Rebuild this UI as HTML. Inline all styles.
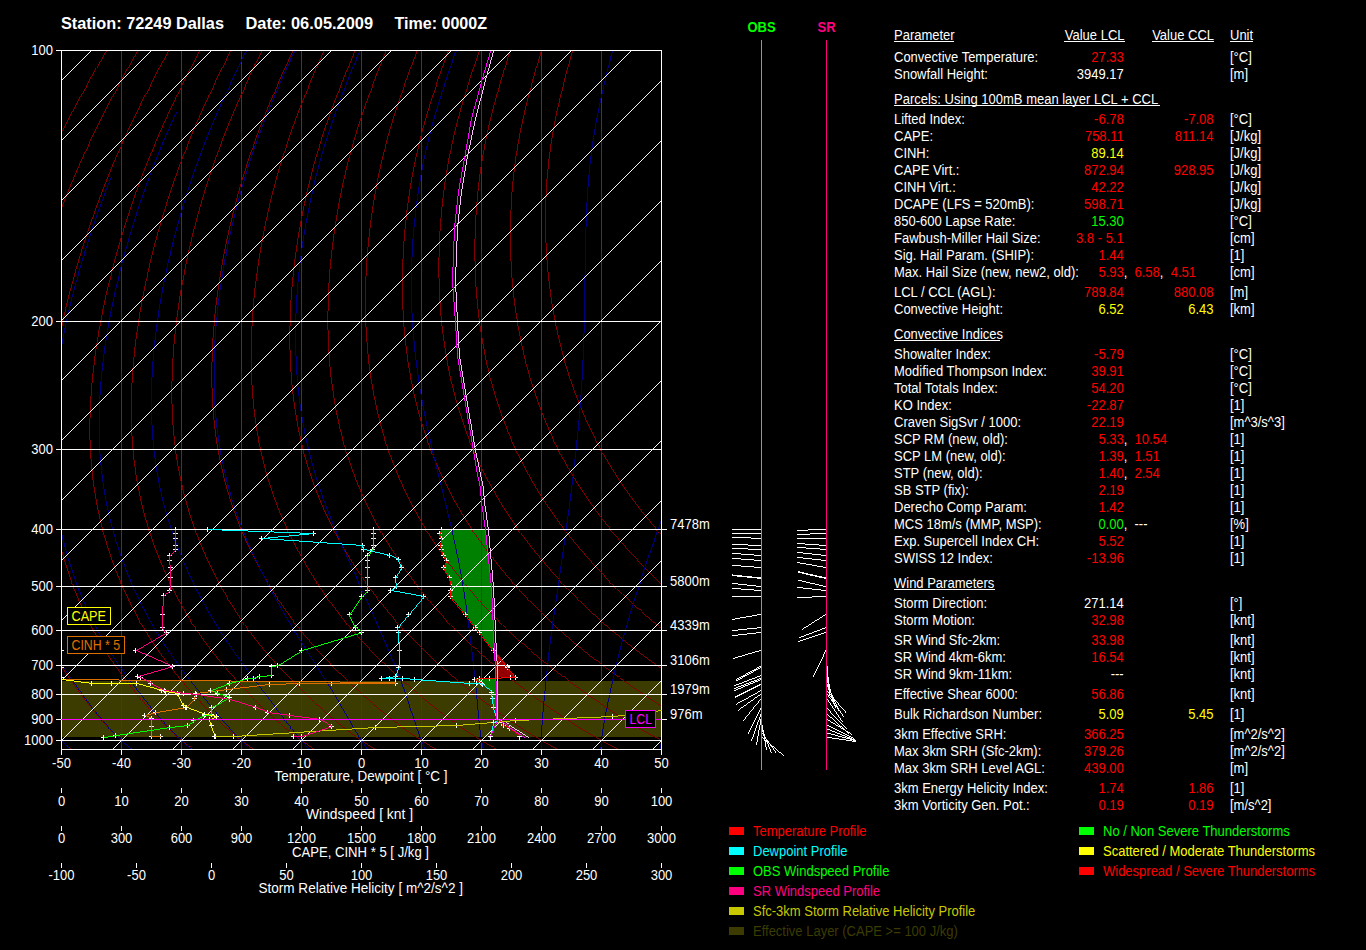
<!DOCTYPE html>
<html lang="en"><head><meta charset="utf-8"><title>Sounding 72249 Dallas</title>
<style>
html,body{margin:0;padding:0;background:#000;width:1366px;height:950px;overflow:hidden}
svg{display:block;position:absolute;left:0;top:0;font-family:"Liberation Sans",sans-serif;font-size:13px;fill:#fff}
.c{shape-rendering:crispEdges}
.c line{stroke-linecap:square}
.c,.c *{stroke-width:.99px}
</style></head><body>
<svg width="1366" height="950" viewBox="0 0 1366 950">
<rect x="0" y="0" width="1366" height="950" fill="#000"/>
<defs><clipPath id="cp"><rect x="61" y="50" width="601" height="700"/></clipPath></defs>
<g clip-path="url(#cp)">
<rect x="61" y="681" width="601" height="56" fill="#3c3c00" class="c"/>
<polygon class="c" fill="#008000" points="441.4,529.5 439.5,533.5 441.4,538.4 440.6,545.4 441.6,549.5 443.6,555.5 446.5,560.4 443.4,567.5 449.1,577.8 451.7,586.7 450.6,590.5 450.8,596.6 465.7,614.5 475.4,627.6 479.5,632.5 493.3,650.3 494.6,650.3 493.7,629 491.2,586 485.6,529.5"/>
<polygon class="c" fill="#960000" points="494.6,650.3 507.5,666 507.5,667.6 515.5,677 496,677.6 495.5,665"/>
<polygon class="c" fill="#008000" points="477,678 496,678 496.8,719 497,719 493.5,707 492.2,698.3 491.6,692.1 482.9,684 481.8,683.6 474.3,679.3"/>
<g class="c" fill="none">
<line x1="121.5" y1="50.5" x2="121.5" y2="749.5" stroke="#006400" stroke-width="1"/>
<line x1="181.5" y1="50.5" x2="181.5" y2="749.5" stroke="#006400" stroke-width="1"/>
<line x1="241.5" y1="50.5" x2="241.5" y2="749.5" stroke="#006400" stroke-width="1"/>
<line x1="301.5" y1="50.5" x2="301.5" y2="749.5" stroke="#006400" stroke-width="1"/>
<line x1="361.5" y1="50.5" x2="361.5" y2="749.5" stroke="#006400" stroke-width="1"/>
<line x1="421.5" y1="50.5" x2="421.5" y2="749.5" stroke="#006400" stroke-width="1"/>
<line x1="481.5" y1="50.5" x2="481.5" y2="749.5" stroke="#006400" stroke-width="1"/>
<line x1="541.5" y1="50.5" x2="541.5" y2="749.5" stroke="#006400" stroke-width="1"/>
<line x1="601.5" y1="50.5" x2="601.5" y2="749.5" stroke="#006400" stroke-width="1"/>
<polyline fill="none" stroke="#800000" stroke-width="1" points="106.1,50.5 101,59.5 96,68.4 91.2,77 86.6,85.5 82,93.7 77.7,101.7 73.5,109.6 69.5,117.2 65.6,124.6 61.9,131.7 58.4,138.7 55.1,145.5 51.9,152.1 48.8,158.4 45.9,164.7 43.1,170.7 40.4,176.7 37.8,182.4 35.3,188.1 32.9,193.6 30.6,199 28.4,204.3 26.2,209.6 24.1,214.7 22.1,219.7 20.1,224.6 18.2,229.4 16.4,234.2 14.6,238.8 12.9,243.4 11.2,247.9 9.5,252.3 8,256.7 6.4,261 4.9,265.2 3.5,269.4 2.1,273.5 0.7,277.5 -0.6,281.4 -1.9,285.4 -3.2,289.2 -4.4,293 -5.6,296.7 -6.8,300.4 -7.9,304.1 -9,307.6 -10,311.2 -11,314.7 -12,318.1 -13,321.5 -15.3,329.8 -17.5,337.8 -19.5,345.6 -21.4,353.2 -23.1,360.5 -24.7,367.6 -26.2,374.5 -27.6,381.3 -28.9,387.8 -30,394.2 -31.1,400.4 -32.1,406.4 -33,412.3 -33.8,418 -34.6,423.6 -35.2,429 -35.8,434.3 -36.3,439.5 -36.8,444.6 -37.2,449.5 -37.5,454.3 -37.8,459.1 -38,463.7 -38.2,468.2 -38.3,472.6 -38.4,476.9 -38.5,481.2 -38.5,485.3 -38.4,489.4 -38.4,493.4 -38.2,497.3 -38.1,501.2 -37.9,504.9 -37.7,508.6 -37.5,512.3 -37.2,515.8 -36.9,519.3 -36.6,522.8 -36.2,526.2 -35.9,529.5 -35.5,532.8 -35.1,536 -34.7,539.2 -34.2,542.3 -33.7,545.4 -33.2,548.4 -32.7,551.4 -32.2,554.3 -31.7,557.2 -31.2,560 -30.6,562.9 -30,565.6 -29.4,568.4 -28.8,571.1 -28.2,573.7 -27.6,576.3 -27,578.9 -26.3,581.5 -25.7,584 -25,586.5 -24.4,589 -23.7,591.4 -23,593.8 -22.3,596.2 -21.6,598.5 -20.9,600.8 -20.2,603.1 -19.5,605.4 -18.8,607.6 -18,609.8 -17.3,612 -16.6,614.2 -15.8,616.3 -15,618.4 -14.3,620.5 -13.5,622.5 -12.7,624.6 -11.9,626.6 -11.1,628.5 -10.3,630.5 -9.5,632.4 -8.7,634.4 -7.9,636.2 -7,638.1 -6.2,640 -5.4,641.8 -4.5,643.6 -3.7,645.4 -2.8,647.2 -2,648.9 -1.1,650.7 -0.2,652.4 0.6,654.1 1.5,655.8 2.4,657.4 3.2,659.1 4.1,660.7 5,662.3 5.9,663.9 6.8,665.5 7.7,667.1 8.6,668.6 9.5,670.2 10.4,671.7 11.3,673.2 12.2,674.7 13.1,676.2 14,677.7 14.9,679.1 15.8,680.6 16.7,682 17.6,683.4 18.5,684.9 19.4,686.3 20.3,687.7 21.2,689.1 22.1,690.4 23,691.8 23.9,693.2 24.8,694.5 25.7,695.8 26.6,697.2 27.5,698.5 28.4,699.8 29.3,701.1 30.2,702.4 31.1,703.7 32,705 32.9,706.2 33.8,707.5 34.7,708.7 35.6,710 36.5,711.2 37.4,712.4 38.3,713.6 39.2,714.8 40.1,716 41,717.2 41.9,718.3 42.8,719.5 43.7,720.6 44.6,721.8 45.5,722.9 46.4,724 47.4,725.1 48.3,726.2 49.2,727.3 50.1,728.4 51.1,729.5 52,730.5 52.9,731.6 53.9,732.6 54.8,733.6 55.8,734.6 56.7,735.6 57.7,736.6 58.6,737.6 59.6,738.6 60.5,739.6 61.5,740.5 62.5,741.4 63.4,742.4 64.4,743.3 65.4,744.2 66.4,745.1 67.4,746 68.4,746.9 69.3,747.8 70.3,748.6 71.3,749.5"/>
<polyline fill="none" stroke="#800000" stroke-width="1" points="137.2,50.5 132.3,59.5 127.5,68.4 122.8,77 118.3,85.5 114,93.7 109.8,101.7 105.8,109.6 101.9,117.2 98.2,124.6 94.7,131.7 91.3,138.7 88.1,145.5 85.1,152.1 82.2,158.4 79.4,164.7 76.8,170.7 74.2,176.7 71.8,182.4 69.4,188.1 67.2,193.6 65,199 62.9,204.3 60.9,209.6 58.9,214.7 57,219.7 55.2,224.6 53.4,229.4 51.7,234.2 50,238.8 48.4,243.4 46.8,247.9 45.3,252.3 43.9,256.7 42.5,261 41.1,265.2 39.7,269.4 38.5,273.5 37.2,277.5 36,281.4 34.8,285.4 33.7,289.2 32.6,293 31.5,296.7 30.5,300.4 29.5,304.1 28.5,307.6 27.5,311.2 26.6,314.7 25.7,318.1 24.9,321.5 22.8,329.8 20.9,337.8 19.2,345.6 17.6,353.2 16.1,360.5 14.7,367.6 13.5,374.5 12.3,381.3 11.3,387.8 10.3,394.2 9.5,400.4 8.7,406.4 8.1,412.3 7.5,418 6.9,423.6 6.5,429 6.1,434.3 5.8,439.5 5.5,444.6 5.3,449.5 5.2,454.3 5.1,459.1 5.1,463.7 5.1,468.2 5.2,472.6 5.3,476.9 5.4,481.2 5.6,485.3 5.8,489.4 6.1,493.4 6.4,497.3 6.7,501.2 7.1,504.9 7.5,508.6 7.9,512.3 8.3,515.8 8.8,519.3 9.3,522.8 9.8,526.2 10.3,529.5 10.9,532.8 11.4,536 12,539.2 12.6,542.3 13.3,545.4 13.9,548.4 14.6,551.4 15.2,554.3 15.9,557.2 16.6,560 17.3,562.9 18,565.6 18.8,568.4 19.5,571.1 20.3,573.7 21,576.3 21.8,578.9 22.6,581.5 23.4,584 24.2,586.5 25,589 25.8,591.4 26.6,593.8 27.4,596.2 28.3,598.5 29.1,600.8 30,603.1 30.8,605.4 31.7,607.6 32.5,609.8 33.4,612 34.3,614.2 35.2,616.3 36.1,618.4 37,620.5 37.9,622.5 38.8,624.6 39.7,626.6 40.6,628.5 41.5,630.5 42.5,632.4 43.4,634.4 44.4,636.2 45.3,638.1 46.3,640 47.2,641.8 48.2,643.6 49.1,645.4 50.1,647.2 51.1,648.9 52.1,650.7 53,652.4 54,654.1 55,655.8 56,657.4 57,659.1 58,660.7 59,662.3 60,663.9 61,665.5 62,667.1 63,668.6 64,670.2 65,671.7 66,673.2 67,674.7 68,676.2 69,677.7 70,679.1 71,680.6 72.1,682 73.1,683.4 74.1,684.9 75.1,686.3 76.1,687.7 77.1,689.1 78.1,690.4 79.1,691.8 80.1,693.2 81.1,694.5 82.1,695.8 83.1,697.2 84.1,698.5 85.1,699.8 86.1,701.1 87.1,702.4 88.1,703.7 89.1,705 90.1,706.2 91.1,707.5 92,708.7 93,710 94,711.2 95,712.4 96,713.6 97,714.8 98,716 99,717.2 100,718.3 101,719.5 102,720.6 103,721.8 104,722.9 105,724 106,725.1 107.1,726.2 108.1,727.3 109.1,728.4 110.1,729.5 111.1,730.5 112.1,731.6 113.2,732.6 114.2,733.6 115.2,734.6 116.3,735.6 117.3,736.6 118.4,737.6 119.4,738.6 120.4,739.6 121.5,740.5 122.6,741.4 123.6,742.4 124.7,743.3 125.7,744.2 126.8,745.1 127.9,746 128.9,746.9 130,747.8 131.1,748.6 132.1,749.5"/>
<polyline fill="none" stroke="#800000" stroke-width="1" points="168.3,50.5 163.5,59.5 158.9,68.4 154.4,77 150.1,85.5 145.9,93.7 141.9,101.7 138,109.6 134.3,117.2 130.8,124.6 127.4,131.7 124.2,138.7 121.2,145.5 118.3,152.1 115.5,158.4 112.9,164.7 110.4,170.7 108,176.7 105.7,182.4 103.5,188.1 101.4,193.6 99.3,199 97.4,204.3 95.5,209.6 93.7,214.7 91.9,219.7 90.2,224.6 88.6,229.4 87,234.2 85.4,238.8 83.9,243.4 82.5,247.9 81.1,252.3 79.8,256.7 78.5,261 77.2,265.2 76,269.4 74.9,273.5 73.7,277.5 72.6,281.4 71.6,285.4 70.6,289.2 69.6,293 68.6,296.7 67.7,300.4 66.8,304.1 65.9,307.6 65.1,311.2 64.3,314.7 63.5,318.1 62.7,321.5 61,329.8 59.3,337.8 57.9,345.6 56.5,353.2 55.3,360.5 54.1,367.6 53.1,374.5 52.2,381.3 51.4,387.8 50.7,394.2 50.1,400.4 49.6,406.4 49.1,412.3 48.7,418 48.4,423.6 48.2,429 48,434.3 47.9,439.5 47.9,444.6 47.9,449.5 47.9,454.3 48.1,459.1 48.2,463.7 48.4,468.2 48.7,472.6 49,476.9 49.3,481.2 49.7,485.3 50.1,489.4 50.5,493.4 51,497.3 51.5,501.2 52.1,504.9 52.6,508.6 53.2,512.3 53.8,515.8 54.4,519.3 55.1,522.8 55.8,526.2 56.5,529.5 57.2,532.8 57.9,536 58.7,539.2 59.5,542.3 60.2,545.4 61,548.4 61.9,551.4 62.7,554.3 63.5,557.2 64.4,560 65.2,562.9 66.1,565.6 67,568.4 67.9,571.1 68.8,573.7 69.7,576.3 70.6,578.9 71.5,581.5 72.5,584 73.4,586.5 74.3,589 75.3,591.4 76.3,593.8 77.2,596.2 78.2,598.5 79.2,600.8 80.1,603.1 81.1,605.4 82.1,607.6 83.1,609.8 84.1,612 85.1,614.2 86.1,616.3 87.2,618.4 88.2,620.5 89.2,622.5 90.3,624.6 91.3,626.6 92.3,628.5 93.4,630.5 94.4,632.4 95.5,634.4 96.6,636.2 97.6,638.1 98.7,640 99.8,641.8 100.9,643.6 102,645.4 103,647.2 104.1,648.9 105.2,650.7 106.3,652.4 107.4,654.1 108.5,655.8 109.6,657.4 110.7,659.1 111.8,660.7 112.9,662.3 114,663.9 115.2,665.5 116.3,667.1 117.4,668.6 118.5,670.2 119.6,671.7 120.7,673.2 121.8,674.7 123,676.2 124.1,677.7 125.2,679.1 126.3,680.6 127.4,682 128.5,683.4 129.6,684.9 130.8,686.3 131.9,687.7 133,689.1 134.1,690.4 135.2,691.8 136.3,693.2 137.4,694.5 138.5,695.8 139.6,697.2 140.7,698.5 141.8,699.8 142.9,701.1 144,702.4 145.1,703.7 146.2,705 147.2,706.2 148.3,707.5 149.4,708.7 150.5,710 151.6,711.2 152.7,712.4 153.8,713.6 154.9,714.8 156,716 157.1,717.2 158.1,718.3 159.2,719.5 160.3,720.6 161.4,721.8 162.5,722.9 163.6,724 164.7,725.1 165.8,726.2 166.9,727.3 168,728.4 169.1,729.5 170.2,730.5 171.4,731.6 172.5,732.6 173.6,733.6 174.7,734.6 175.8,735.6 177,736.6 178.1,737.6 179.2,738.6 180.4,739.6 181.5,740.5 182.6,741.4 183.8,742.4 184.9,743.3 186.1,744.2 187.2,745.1 188.4,746 189.5,746.9 190.7,747.8 191.8,748.6 193,749.5"/>
<polyline fill="none" stroke="#800000" stroke-width="1" points="199.3,50.5 194.8,59.5 190.3,68.4 186,77 181.9,85.5 177.8,93.7 174,101.7 170.3,109.6 166.7,117.2 163.4,124.6 160.2,131.7 157.1,138.7 154.2,145.5 151.5,152.1 148.9,158.4 146.4,164.7 144,170.7 141.8,176.7 139.6,182.4 137.6,188.1 135.6,193.6 133.7,199 131.9,204.3 130.1,209.6 128.4,214.7 126.8,219.7 125.2,224.6 123.7,229.4 122.3,234.2 120.8,238.8 119.5,243.4 118.2,247.9 116.9,252.3 115.7,256.7 114.5,261 113.4,265.2 112.3,269.4 111.3,273.5 110.3,277.5 109.3,281.4 108.3,285.4 107.4,289.2 106.6,293 105.7,296.7 104.9,300.4 104.1,304.1 103.4,307.6 102.6,311.2 102,314.7 101.3,318.1 100.6,321.5 99.1,329.8 97.8,337.8 96.5,345.6 95.4,353.2 94.4,360.5 93.6,367.6 92.8,374.5 92.1,381.3 91.6,387.8 91.1,394.2 90.7,400.4 90.4,406.4 90.2,412.3 90,418 89.9,423.6 89.9,429 89.9,434.3 90,439.5 90.2,444.6 90.4,449.5 90.7,454.3 91,459.1 91.4,463.7 91.8,468.2 92.2,472.6 92.7,476.9 93.2,481.2 93.8,485.3 94.4,489.4 95,493.4 95.7,497.3 96.3,501.2 97,504.9 97.8,508.6 98.5,512.3 99.3,515.8 100.1,519.3 101,522.8 101.8,526.2 102.7,529.5 103.5,532.8 104.4,536 105.4,539.2 106.3,542.3 107.2,545.4 108.2,548.4 109.2,551.4 110.1,554.3 111.1,557.2 112.1,560 113.1,562.9 114.2,565.6 115.2,568.4 116.2,571.1 117.3,573.7 118.3,576.3 119.4,578.9 120.5,581.5 121.5,584 122.6,586.5 123.7,589 124.8,591.4 125.9,593.8 127,596.2 128.1,598.5 129.2,600.8 130.3,603.1 131.4,605.4 132.6,607.6 133.7,609.8 134.8,612 136,614.2 137.1,616.3 138.3,618.4 139.4,620.5 140.6,622.5 141.7,624.6 142.9,626.6 144.1,628.5 145.2,630.5 146.4,632.4 147.6,634.4 148.8,636.2 150,638.1 151.2,640 152.4,641.8 153.6,643.6 154.8,645.4 156,647.2 157.2,648.9 158.4,650.7 159.6,652.4 160.8,654.1 162,655.8 163.2,657.4 164.5,659.1 165.7,660.7 166.9,662.3 168.1,663.9 169.3,665.5 170.6,667.1 171.8,668.6 173,670.2 174.2,671.7 175.5,673.2 176.7,674.7 177.9,676.2 179.1,677.7 180.4,679.1 181.6,680.6 182.8,682 184,683.4 185.2,684.9 186.4,686.3 187.7,687.7 188.9,689.1 190.1,690.4 191.3,691.8 192.5,693.2 193.7,694.5 194.9,695.8 196.1,697.2 197.3,698.5 198.5,699.8 199.7,701.1 200.9,702.4 202,703.7 203.2,705 204.4,706.2 205.6,707.5 206.8,708.7 208,710 209.2,711.2 210.4,712.4 211.5,713.6 212.7,714.8 213.9,716 215.1,717.2 216.3,718.3 217.5,719.5 218.6,720.6 219.8,721.8 221,722.9 222.2,724 223.4,725.1 224.6,726.2 225.8,727.3 227,728.4 228.2,729.5 229.4,730.5 230.6,731.6 231.8,732.6 233,733.6 234.2,734.6 235.4,735.6 236.6,736.6 237.8,737.6 239.1,738.6 240.3,739.6 241.5,740.5 242.7,741.4 244,742.4 245.2,743.3 246.4,744.2 247.7,745.1 248.9,746 250.1,746.9 251.4,747.8 252.6,748.6 253.8,749.5"/>
<polyline fill="none" stroke="#800000" stroke-width="1" points="230.4,50.5 226,59.5 221.8,68.4 217.6,77 213.6,85.5 209.8,93.7 206.1,101.7 202.5,109.6 199.2,117.2 195.9,124.6 192.9,131.7 190,138.7 187.3,145.5 184.7,152.1 182.2,158.4 179.9,164.7 177.7,170.7 175.6,176.7 173.6,182.4 171.6,188.1 169.8,193.6 168,199 166.4,204.3 164.7,209.6 163.2,214.7 161.7,219.7 160.3,224.6 158.9,229.4 157.5,234.2 156.3,238.8 155,243.4 153.9,247.9 152.7,252.3 151.6,256.7 150.6,261 149.6,265.2 148.6,269.4 147.7,273.5 146.8,277.5 145.9,281.4 145.1,285.4 144.3,289.2 143.6,293 142.8,296.7 142.1,300.4 141.5,304.1 140.8,307.6 140.2,311.2 139.6,314.7 139.1,318.1 138.5,321.5 137.3,329.8 136.2,337.8 135.2,345.6 134.4,353.2 133.6,360.5 133,367.6 132.5,374.5 132.1,381.3 131.7,387.8 131.5,394.2 131.3,400.4 131.2,406.4 131.2,412.3 131.3,418 131.4,423.6 131.6,429 131.9,434.3 132.2,439.5 132.5,444.6 133,449.5 133.4,454.3 133.9,459.1 134.5,463.7 135.1,468.2 135.7,472.6 136.4,476.9 137.1,481.2 137.9,485.3 138.6,489.4 139.5,493.4 140.3,497.3 141.1,501.2 142,504.9 142.9,508.6 143.9,512.3 144.8,515.8 145.8,519.3 146.8,522.8 147.8,526.2 148.8,529.5 149.9,532.8 150.9,536 152,539.2 153.1,542.3 154.2,545.4 155.3,548.4 156.5,551.4 157.6,554.3 158.7,557.2 159.9,560 161.1,562.9 162.2,565.6 163.4,568.4 164.6,571.1 165.8,573.7 167,576.3 168.2,578.9 169.4,581.5 170.6,584 171.8,586.5 173.1,589 174.3,591.4 175.5,593.8 176.8,596.2 178,598.5 179.3,600.8 180.5,603.1 181.8,605.4 183,607.6 184.3,609.8 185.5,612 186.8,614.2 188.1,616.3 189.4,618.4 190.6,620.5 191.9,622.5 193.2,624.6 194.5,626.6 195.8,628.5 197.1,630.5 198.4,632.4 199.7,634.4 201,636.2 202.3,638.1 203.6,640 205,641.8 206.3,643.6 207.6,645.4 208.9,647.2 210.2,648.9 211.6,650.7 212.9,652.4 214.2,654.1 215.5,655.8 216.9,657.4 218.2,659.1 219.5,660.7 220.9,662.3 222.2,663.9 223.5,665.5 224.9,667.1 226.2,668.6 227.5,670.2 228.9,671.7 230.2,673.2 231.5,674.7 232.9,676.2 234.2,677.7 235.5,679.1 236.8,680.6 238.2,682 239.5,683.4 240.8,684.9 242.1,686.3 243.4,687.7 244.8,689.1 246.1,690.4 247.4,691.8 248.7,693.2 250,694.5 251.3,695.8 252.6,697.2 253.9,698.5 255.2,699.8 256.5,701.1 257.7,702.4 259,703.7 260.3,705 261.6,706.2 262.9,707.5 264.2,708.7 265.5,710 266.7,711.2 268,712.4 269.3,713.6 270.6,714.8 271.8,716 273.1,717.2 274.4,718.3 275.7,719.5 277,720.6 278.2,721.8 279.5,722.9 280.8,724 282.1,725.1 283.4,726.2 284.6,727.3 285.9,728.4 287.2,729.5 288.5,730.5 289.8,731.6 291.1,732.6 292.4,733.6 293.7,734.6 295,735.6 296.3,736.6 297.6,737.6 298.9,738.6 300.2,739.6 301.5,740.5 302.8,741.4 304.1,742.4 305.4,743.3 306.8,744.2 308.1,745.1 309.4,746 310.7,746.9 312,747.8 313.4,748.6 314.7,749.5"/>
<polyline fill="none" stroke="#800000" stroke-width="1" points="261.5,50.5 257.3,59.5 253.2,68.4 249.2,77 245.4,85.5 241.7,93.7 238.2,101.7 234.8,109.6 231.6,117.2 228.5,124.6 225.6,131.7 222.9,138.7 220.3,145.5 217.9,152.1 215.6,158.4 213.4,164.7 211.3,170.7 209.4,176.7 207.5,182.4 205.7,188.1 204,193.6 202.4,199 200.9,204.3 199.4,209.6 197.9,214.7 196.6,219.7 195.3,224.6 194,229.4 192.8,234.2 191.7,238.8 190.6,243.4 189.5,247.9 188.5,252.3 187.5,256.7 186.6,261 185.7,265.2 184.9,269.4 184.1,273.5 183.3,277.5 182.6,281.4 181.9,285.4 181.2,289.2 180.5,293 179.9,296.7 179.3,300.4 178.8,304.1 178.3,307.6 177.8,311.2 177.3,314.7 176.8,318.1 176.4,321.5 175.4,329.8 174.6,337.8 173.9,345.6 173.3,353.2 172.8,360.5 172.4,367.6 172.1,374.5 172,381.3 171.9,387.8 171.9,394.2 171.9,400.4 172.1,406.4 172.3,412.3 172.6,418 172.9,423.6 173.3,429 173.8,434.3 174.3,439.5 174.9,444.6 175.5,449.5 176.2,454.3 176.9,459.1 177.6,463.7 178.4,468.2 179.3,472.6 180.1,476.9 181,481.2 182,485.3 182.9,489.4 183.9,493.4 184.9,497.3 186,501.2 187,504.9 188.1,508.6 189.2,512.3 190.3,515.8 191.5,519.3 192.6,522.8 193.8,526.2 195,529.5 196.2,532.8 197.5,536 198.7,539.2 199.9,542.3 201.2,545.4 202.5,548.4 203.8,551.4 205,554.3 206.3,557.2 207.7,560 209,562.9 210.3,565.6 211.6,568.4 213,571.1 214.3,573.7 215.6,576.3 217,578.9 218.3,581.5 219.7,584 221.1,586.5 222.4,589 223.8,591.4 225.2,593.8 226.5,596.2 227.9,598.5 229.3,600.8 230.7,603.1 232.1,605.4 233.5,607.6 234.9,609.8 236.2,612 237.6,614.2 239.1,616.3 240.5,618.4 241.9,620.5 243.3,622.5 244.7,624.6 246.1,626.6 247.5,628.5 248.9,630.5 250.4,632.4 251.8,634.4 253.2,636.2 254.7,638.1 256.1,640 257.5,641.8 259,643.6 260.4,645.4 261.8,647.2 263.3,648.9 264.7,650.7 266.2,652.4 267.6,654.1 269.1,655.8 270.5,657.4 271.9,659.1 273.4,660.7 274.8,662.3 276.3,663.9 277.7,665.5 279.2,667.1 280.6,668.6 282,670.2 283.5,671.7 284.9,673.2 286.4,674.7 287.8,676.2 289.2,677.7 290.7,679.1 292.1,680.6 293.5,682 295,683.4 296.4,684.9 297.8,686.3 299.2,687.7 300.6,689.1 302.1,690.4 303.5,691.8 304.9,693.2 306.3,694.5 307.7,695.8 309.1,697.2 310.5,698.5 311.9,699.8 313.3,701.1 314.6,702.4 316,703.7 317.4,705 318.8,706.2 320.2,707.5 321.5,708.7 322.9,710 324.3,711.2 325.7,712.4 327,713.6 328.4,714.8 329.8,716 331.2,717.2 332.5,718.3 333.9,719.5 335.3,720.6 336.6,721.8 338,722.9 339.4,724 340.8,725.1 342.1,726.2 343.5,727.3 344.9,728.4 346.3,729.5 347.6,730.5 349,731.6 350.4,732.6 351.8,733.6 353.2,734.6 354.5,735.6 355.9,736.6 357.3,737.6 358.7,738.6 360.1,739.6 361.5,740.5 362.9,741.4 364.3,742.4 365.7,743.3 367.1,744.2 368.5,745.1 369.9,746 371.3,746.9 372.7,747.8 374.1,748.6 375.5,749.5"/>
<polyline fill="none" stroke="#800000" stroke-width="1" points="292.6,50.5 288.5,59.5 284.6,68.4 280.8,77 277.2,85.5 273.7,93.7 270.3,101.7 267.1,109.6 264,117.2 261.1,124.6 258.4,131.7 255.8,138.7 253.4,145.5 251.1,152.1 248.9,158.4 246.9,164.7 245,170.7 243.1,176.7 241.4,182.4 239.8,188.1 238.2,193.6 236.8,199 235.3,204.3 234,209.6 232.7,214.7 231.5,219.7 230.3,224.6 229.2,229.4 228.1,234.2 227.1,238.8 226.1,243.4 225.2,247.9 224.3,252.3 223.5,256.7 222.7,261 221.9,265.2 221.2,269.4 220.5,273.5 219.8,277.5 219.2,281.4 218.6,285.4 218.1,289.2 217.5,293 217,296.7 216.6,300.4 216.1,304.1 215.7,307.6 215.3,311.2 214.9,314.7 214.6,318.1 214.3,321.5 213.6,329.8 213,337.8 212.6,345.6 212.2,353.2 212,360.5 211.9,367.6 211.8,374.5 211.9,381.3 212,387.8 212.2,394.2 212.5,400.4 212.9,406.4 213.3,412.3 213.8,418 214.4,423.6 215,429 215.7,434.3 216.4,439.5 217.2,444.6 218,449.5 218.9,454.3 219.8,459.1 220.8,463.7 221.8,468.2 222.8,472.6 223.8,476.9 224.9,481.2 226,485.3 227.2,489.4 228.4,493.4 229.6,497.3 230.8,501.2 232,504.9 233.3,508.6 234.6,512.3 235.8,515.8 237.2,519.3 238.5,522.8 239.8,526.2 241.2,529.5 242.6,532.8 244,536 245.4,539.2 246.8,542.3 248.2,545.4 249.6,548.4 251.1,551.4 252.5,554.3 254,557.2 255.4,560 256.9,562.9 258.4,565.6 259.8,568.4 261.3,571.1 262.8,573.7 264.3,576.3 265.8,578.9 267.3,581.5 268.8,584 270.3,586.5 271.8,589 273.3,591.4 274.8,593.8 276.3,596.2 277.8,598.5 279.3,600.8 280.9,603.1 282.4,605.4 283.9,607.6 285.4,609.8 287,612 288.5,614.2 290,616.3 291.6,618.4 293.1,620.5 294.6,622.5 296.2,624.6 297.7,626.6 299.3,628.5 300.8,630.5 302.3,632.4 303.9,634.4 305.5,636.2 307,638.1 308.6,640 310.1,641.8 311.7,643.6 313.2,645.4 314.8,647.2 316.3,648.9 317.9,650.7 319.5,652.4 321,654.1 322.6,655.8 324.1,657.4 325.7,659.1 327.2,660.7 328.8,662.3 330.4,663.9 331.9,665.5 333.5,667.1 335,668.6 336.6,670.2 338.1,671.7 339.7,673.2 341.2,674.7 342.8,676.2 344.3,677.7 345.8,679.1 347.4,680.6 348.9,682 350.4,683.4 352,684.9 353.5,686.3 355,687.7 356.5,689.1 358,690.4 359.6,691.8 361.1,693.2 362.6,694.5 364.1,695.8 365.6,697.2 367.1,698.5 368.6,699.8 370,701.1 371.5,702.4 373,703.7 374.5,705 376,706.2 377.4,707.5 378.9,708.7 380.4,710 381.9,711.2 383.3,712.4 384.8,713.6 386.3,714.8 387.7,716 389.2,717.2 390.7,718.3 392.1,719.5 393.6,720.6 395,721.8 396.5,722.9 398,724 399.4,725.1 400.9,726.2 402.4,727.3 403.8,728.4 405.3,729.5 406.8,730.5 408.2,731.6 409.7,732.6 411.2,733.6 412.6,734.6 414.1,735.6 415.6,736.6 417.1,737.6 418.5,738.6 420,739.6 421.5,740.5 423,741.4 424.5,742.4 426,743.3 427.4,744.2 428.9,745.1 430.4,746 431.9,746.9 433.4,747.8 434.9,748.6 436.3,749.5"/>
<polyline fill="none" stroke="#800000" stroke-width="1" points="323.6,50.5 319.8,59.5 316,68.4 312.4,77 308.9,85.5 305.6,93.7 302.4,101.7 299.3,109.6 296.4,117.2 293.7,124.6 291.1,131.7 288.7,138.7 286.4,145.5 284.3,152.1 282.3,158.4 280.4,164.7 278.6,170.7 276.9,176.7 275.4,182.4 273.9,188.1 272.4,193.6 271.1,199 269.8,204.3 268.6,209.6 267.5,214.7 266.4,219.7 265.3,224.6 264.3,229.4 263.4,234.2 262.5,238.8 261.7,243.4 260.9,247.9 260.1,252.3 259.4,256.7 258.7,261 258.1,265.2 257.5,269.4 256.9,273.5 256.4,277.5 255.9,281.4 255.4,285.4 254.9,289.2 254.5,293 254.1,296.7 253.8,300.4 253.5,304.1 253.2,307.6 252.9,311.2 252.6,314.7 252.4,318.1 252.2,321.5 251.7,329.8 251.4,337.8 251.2,345.6 251.1,353.2 251.2,360.5 251.3,367.6 251.5,374.5 251.8,381.3 252.2,387.8 252.6,394.2 253.1,400.4 253.7,406.4 254.4,412.3 255.1,418 255.9,423.6 256.7,429 257.6,434.3 258.6,439.5 259.5,444.6 260.6,449.5 261.6,454.3 262.7,459.1 263.9,463.7 265.1,468.2 266.3,472.6 267.5,476.9 268.8,481.2 270.1,485.3 271.5,489.4 272.8,493.4 274.2,497.3 275.6,501.2 277,504.9 278.4,508.6 279.9,512.3 281.4,515.8 282.8,519.3 284.3,522.8 285.9,526.2 287.4,529.5 288.9,532.8 290.5,536 292,539.2 293.6,542.3 295.2,545.4 296.8,548.4 298.4,551.4 300,554.3 301.6,557.2 303.2,560 304.8,562.9 306.4,565.6 308,568.4 309.7,571.1 311.3,573.7 312.9,576.3 314.6,578.9 316.2,581.5 317.9,584 319.5,586.5 321.1,589 322.8,591.4 324.4,593.8 326.1,596.2 327.7,598.5 329.4,600.8 331,603.1 332.7,605.4 334.4,607.6 336,609.8 337.7,612 339.3,614.2 341,616.3 342.7,618.4 344.3,620.5 346,622.5 347.6,624.6 349.3,626.6 351,628.5 352.7,630.5 354.3,632.4 356,634.4 357.7,636.2 359.3,638.1 361,640 362.7,641.8 364.4,643.6 366,645.4 367.7,647.2 369.4,648.9 371.1,650.7 372.7,652.4 374.4,654.1 376.1,655.8 377.8,657.4 379.4,659.1 381.1,660.7 382.8,662.3 384.4,663.9 386.1,665.5 387.8,667.1 389.4,668.6 391.1,670.2 392.7,671.7 394.4,673.2 396,674.7 397.7,676.2 399.3,677.7 401,679.1 402.6,680.6 404.3,682 405.9,683.4 407.5,684.9 409.2,686.3 410.8,687.7 412.4,689.1 414,690.4 415.7,691.8 417.3,693.2 418.9,694.5 420.5,695.8 422.1,697.2 423.7,698.5 425.2,699.8 426.8,701.1 428.4,702.4 430,703.7 431.6,705 433.1,706.2 434.7,707.5 436.3,708.7 437.9,710 439.4,711.2 441,712.4 442.6,713.6 444.1,714.8 445.7,716 447.2,717.2 448.8,718.3 450.3,719.5 451.9,720.6 453.5,721.8 455,722.9 456.6,724 458.1,725.1 459.7,726.2 461.2,727.3 462.8,728.4 464.3,729.5 465.9,730.5 467.4,731.6 469,732.6 470.6,733.6 472.1,734.6 473.7,735.6 475.2,736.6 476.8,737.6 478.4,738.6 479.9,739.6 481.5,740.5 483.1,741.4 484.6,742.4 486.2,743.3 487.8,744.2 489.4,745.1 490.9,746 492.5,746.9 494.1,747.8 495.6,748.6 497.2,749.5"/>
<polyline fill="none" stroke="#800000" stroke-width="1" points="354.7,50.5 351,59.5 347.5,68.4 344,77 340.7,85.5 337.5,93.7 334.5,101.7 331.6,109.6 328.9,117.2 326.3,124.6 323.9,131.7 321.6,138.7 319.5,145.5 317.5,152.1 315.6,158.4 313.9,164.7 312.3,170.7 310.7,176.7 309.3,182.4 307.9,188.1 306.7,193.6 305.5,199 304.3,204.3 303.2,209.6 302.2,214.7 301.3,219.7 300.4,224.6 299.5,229.4 298.7,234.2 297.9,238.8 297.2,243.4 296.5,247.9 295.9,252.3 295.3,256.7 294.8,261 294.2,265.2 293.8,269.4 293.3,273.5 292.9,277.5 292.5,281.4 292.1,285.4 291.8,289.2 291.5,293 291.3,296.7 291,300.4 290.8,304.1 290.6,307.6 290.4,311.2 290.3,314.7 290.2,318.1 290.1,321.5 289.9,329.8 289.8,337.8 289.9,345.6 290.1,353.2 290.3,360.5 290.7,367.6 291.2,374.5 291.7,381.3 292.3,387.8 293,394.2 293.7,400.4 294.6,406.4 295.5,412.3 296.4,418 297.4,423.6 298.4,429 299.5,434.3 300.7,439.5 301.9,444.6 303.1,449.5 304.4,454.3 305.7,459.1 307,463.7 308.4,468.2 309.8,472.6 311.3,476.9 312.7,481.2 314.2,485.3 315.7,489.4 317.3,493.4 318.8,497.3 320.4,501.2 322,504.9 323.6,508.6 325.2,512.3 326.9,515.8 328.5,519.3 330.2,522.8 331.9,526.2 333.6,529.5 335.3,532.8 337,536 338.7,539.2 340.4,542.3 342.2,545.4 343.9,548.4 345.7,551.4 347.4,554.3 349.2,557.2 350.9,560 352.7,562.9 354.5,565.6 356.2,568.4 358,571.1 359.8,573.7 361.6,576.3 363.4,578.9 365.2,581.5 366.9,584 368.7,586.5 370.5,589 372.3,591.4 374.1,593.8 375.9,596.2 377.7,598.5 379.4,600.8 381.2,603.1 383,605.4 384.8,607.6 386.6,609.8 388.4,612 390.2,614.2 392,616.3 393.8,618.4 395.5,620.5 397.3,622.5 399.1,624.6 400.9,626.6 402.7,628.5 404.5,630.5 406.3,632.4 408.1,634.4 409.9,636.2 411.7,638.1 413.5,640 415.3,641.8 417.1,643.6 418.9,645.4 420.7,647.2 422.4,648.9 424.2,650.7 426,652.4 427.8,654.1 429.6,655.8 431.4,657.4 433.2,659.1 434.9,660.7 436.7,662.3 438.5,663.9 440.3,665.5 442.1,667.1 443.8,668.6 445.6,670.2 447.4,671.7 449.1,673.2 450.9,674.7 452.6,676.2 454.4,677.7 456.2,679.1 457.9,680.6 459.6,682 461.4,683.4 463.1,684.9 464.9,686.3 466.6,687.7 468.3,689.1 470,690.4 471.7,691.8 473.5,693.2 475.2,694.5 476.9,695.8 478.6,697.2 480.3,698.5 481.9,699.8 483.6,701.1 485.3,702.4 487,703.7 488.7,705 490.3,706.2 492,707.5 493.7,708.7 495.3,710 497,711.2 498.6,712.4 500.3,713.6 502,714.8 503.6,716 505.3,717.2 506.9,718.3 508.6,719.5 510.2,720.6 511.9,721.8 513.5,722.9 515.1,724 516.8,725.1 518.4,726.2 520.1,727.3 521.7,728.4 523.4,729.5 525,730.5 526.7,731.6 528.3,732.6 529.9,733.6 531.6,734.6 533.2,735.6 534.9,736.6 536.5,737.6 538.2,738.6 539.8,739.6 541.5,740.5 543.2,741.4 544.8,742.4 546.5,743.3 548.1,744.2 549.8,745.1 551.4,746 553.1,746.9 554.7,747.8 556.4,748.6 558,749.5"/>
<polyline fill="none" stroke="#800000" stroke-width="1" points="385.8,50.5 382.3,59.5 378.9,68.4 375.6,77 372.5,85.5 369.5,93.7 366.6,101.7 363.9,109.6 361.3,117.2 358.9,124.6 356.6,131.7 354.5,138.7 352.5,145.5 350.7,152.1 349,158.4 347.4,164.7 345.9,170.7 344.5,176.7 343.2,182.4 342,188.1 340.9,193.6 339.8,199 338.8,204.3 337.9,209.6 337,214.7 336.2,219.7 335.4,224.6 334.7,229.4 334,234.2 333.3,238.8 332.8,243.4 332.2,247.9 331.7,252.3 331.2,256.7 330.8,261 330.4,265.2 330,269.4 329.7,273.5 329.4,277.5 329.1,281.4 328.9,285.4 328.7,289.2 328.5,293 328.4,296.7 328.2,300.4 328.1,304.1 328,307.6 328,311.2 327.9,314.7 327.9,318.1 327.9,321.5 328,329.8 328.3,337.8 328.6,345.6 329,353.2 329.5,360.5 330.1,367.6 330.8,374.5 331.6,381.3 332.5,387.8 333.4,394.2 334.4,400.4 335.4,406.4 336.5,412.3 337.7,418 338.9,423.6 340.1,429 341.5,434.3 342.8,439.5 344.2,444.6 345.6,449.5 347.1,454.3 348.6,459.1 350.2,463.7 351.7,468.2 353.3,472.6 355,476.9 356.6,481.2 358.3,485.3 360,489.4 361.7,493.4 363.4,497.3 365.2,501.2 367,504.9 368.8,508.6 370.6,512.3 372.4,515.8 374.2,519.3 376,522.8 377.9,526.2 379.7,529.5 381.6,532.8 383.5,536 385.4,539.2 387.3,542.3 389.2,545.4 391.1,548.4 393,551.4 394.9,554.3 396.8,557.2 398.7,560 400.6,562.9 402.5,565.6 404.5,568.4 406.4,571.1 408.3,573.7 410.2,576.3 412.2,578.9 414.1,581.5 416,584 417.9,586.5 419.9,589 421.8,591.4 423.7,593.8 425.6,596.2 427.6,598.5 429.5,600.8 431.4,603.1 433.3,605.4 435.3,607.6 437.2,609.8 439.1,612 441,614.2 442.9,616.3 444.8,618.4 446.8,620.5 448.7,622.5 450.6,624.6 452.5,626.6 454.4,628.5 456.4,630.5 458.3,632.4 460.2,634.4 462.1,636.2 464,638.1 465.9,640 467.9,641.8 469.8,643.6 471.7,645.4 473.6,647.2 475.5,648.9 477.4,650.7 479.3,652.4 481.2,654.1 483.1,655.8 485,657.4 486.9,659.1 488.8,660.7 490.7,662.3 492.6,663.9 494.5,665.5 496.4,667.1 498.2,668.6 500.1,670.2 502,671.7 503.9,673.2 505.7,674.7 507.6,676.2 509.5,677.7 511.3,679.1 513.2,680.6 515,682 516.9,683.4 518.7,684.9 520.5,686.3 522.4,687.7 524.2,689.1 526,690.4 527.8,691.8 529.6,693.2 531.5,694.5 533.3,695.8 535.1,697.2 536.8,698.5 538.6,699.8 540.4,701.1 542.2,702.4 544,703.7 545.7,705 547.5,706.2 549.3,707.5 551,708.7 552.8,710 554.6,711.2 556.3,712.4 558.1,713.6 559.8,714.8 561.6,716 563.3,717.2 565,718.3 566.8,719.5 568.5,720.6 570.3,721.8 572,722.9 573.7,724 575.5,725.1 577.2,726.2 578.9,727.3 580.7,728.4 582.4,729.5 584.1,730.5 585.9,731.6 587.6,732.6 589.3,733.6 591.1,734.6 592.8,735.6 594.5,736.6 596.3,737.6 598,738.6 599.8,739.6 601.5,740.5 603.2,741.4 605,742.4 606.7,743.3 608.5,744.2 610.2,745.1 611.9,746 613.7,746.9 615.4,747.8 617.1,748.6 618.9,749.5"/>
<polyline fill="none" stroke="#800000" stroke-width="1" points="416.9,50.5 413.5,59.5 410.3,68.4 407.2,77 404.2,85.5 401.4,93.7 398.7,101.7 396.1,109.6 393.7,117.2 391.4,124.6 389.3,131.7 387.4,138.7 385.6,145.5 383.9,152.1 382.3,158.4 380.9,164.7 379.5,170.7 378.3,176.7 377.1,182.4 376.1,188.1 375.1,193.6 374.2,199 373.3,204.3 372.5,209.6 371.8,214.7 371.1,219.7 370.4,224.6 369.8,229.4 369.3,234.2 368.8,238.8 368.3,243.4 367.9,247.9 367.5,252.3 367.1,256.7 366.8,261 366.6,265.2 366.3,269.4 366.1,273.5 365.9,277.5 365.8,281.4 365.7,285.4 365.6,289.2 365.5,293 365.5,296.7 365.4,300.4 365.5,304.1 365.5,307.6 365.5,311.2 365.6,314.7 365.7,318.1 365.8,321.5 366.2,329.8 366.7,337.8 367.3,345.6 367.9,353.2 368.7,360.5 369.6,367.6 370.5,374.5 371.5,381.3 372.6,387.8 373.7,394.2 375,400.4 376.2,406.4 377.6,412.3 378.9,418 380.4,423.6 381.9,429 383.4,434.3 384.9,439.5 386.5,444.6 388.2,449.5 389.9,454.3 391.6,459.1 393.3,463.7 395.1,468.2 396.9,472.6 398.7,476.9 400.5,481.2 402.4,485.3 404.3,489.4 406.2,493.4 408.1,497.3 410,501.2 412,504.9 413.9,508.6 415.9,512.3 417.9,515.8 419.9,519.3 421.9,522.8 423.9,526.2 425.9,529.5 428,532.8 430,536 432,539.2 434.1,542.3 436.1,545.4 438.2,548.4 440.3,551.4 442.3,554.3 444.4,557.2 446.5,560 448.5,562.9 450.6,565.6 452.7,568.4 454.7,571.1 456.8,573.7 458.9,576.3 461,578.9 463,581.5 465.1,584 467.2,586.5 469.2,589 471.3,591.4 473.4,593.8 475.4,596.2 477.5,598.5 479.5,600.8 481.6,603.1 483.6,605.4 485.7,607.6 487.8,609.8 489.8,612 491.9,614.2 493.9,616.3 495.9,618.4 498,620.5 500,622.5 502.1,624.6 504.1,626.6 506.2,628.5 508.2,630.5 510.3,632.4 512.3,634.4 514.3,636.2 516.4,638.1 518.4,640 520.4,641.8 522.5,643.6 524.5,645.4 526.5,647.2 528.5,648.9 530.6,650.7 532.6,652.4 534.6,654.1 536.6,655.8 538.6,657.4 540.6,659.1 542.7,660.7 544.7,662.3 546.7,663.9 548.7,665.5 550.7,667.1 552.6,668.6 554.6,670.2 556.6,671.7 558.6,673.2 560.6,674.7 562.5,676.2 564.5,677.7 566.5,679.1 568.4,680.6 570.4,682 572.3,683.4 574.3,684.9 576.2,686.3 578.2,687.7 580.1,689.1 582,690.4 583.9,691.8 585.8,693.2 587.7,694.5 589.7,695.8 591.5,697.2 593.4,698.5 595.3,699.8 597.2,701.1 599.1,702.4 601,703.7 602.8,705 604.7,706.2 606.6,707.5 608.4,708.7 610.3,710 612.1,711.2 614,712.4 615.8,713.6 617.7,714.8 619.5,716 621.3,717.2 623.2,718.3 625,719.5 626.8,720.6 628.7,721.8 630.5,722.9 632.3,724 634.1,725.1 636,726.2 637.8,727.3 639.6,728.4 641.4,729.5 643.3,730.5 645.1,731.6 646.9,732.6 648.7,733.6 650.6,734.6 652.4,735.6 654.2,736.6 656,737.6 657.8,738.6 659.7,739.6 661.5,740.5 663.3,741.4 665.2,742.4 667,743.3 668.8,744.2 670.6,745.1 672.5,746 674.3,746.9 676.1,747.8 677.9,748.6 679.7,749.5"/>
<polyline fill="none" stroke="#800000" stroke-width="1" points="448,50.5 444.8,59.5 441.8,68.4 438.8,77 436,85.5 433.3,93.7 430.8,101.7 428.4,109.6 426.1,117.2 424,124.6 422.1,131.7 420.3,138.7 418.6,145.5 417.1,152.1 415.7,158.4 414.4,164.7 413.2,170.7 412.1,176.7 411.1,182.4 410.2,188.1 409.3,193.6 408.5,199 407.8,204.3 407.1,209.6 406.5,214.7 406,219.7 405.4,224.6 405,229.4 404.6,234.2 404.2,238.8 403.8,243.4 403.5,247.9 403.3,252.3 403.1,256.7 402.9,261 402.7,265.2 402.6,269.4 402.5,273.5 402.5,277.5 402.4,281.4 402.4,285.4 402.4,289.2 402.5,293 402.6,296.7 402.7,300.4 402.8,304.1 402.9,307.6 403.1,311.2 403.3,314.7 403.5,318.1 403.7,321.5 404.3,329.8 405.1,337.8 405.9,345.6 406.9,353.2 407.9,360.5 409,367.6 410.2,374.5 411.4,381.3 412.7,387.8 414.1,394.2 415.6,400.4 417.1,406.4 418.6,412.3 420.2,418 421.9,423.6 423.6,429 425.3,434.3 427.1,439.5 428.9,444.6 430.7,449.5 432.6,454.3 434.5,459.1 436.4,463.7 438.4,468.2 440.4,472.6 442.4,476.9 444.4,481.2 446.5,485.3 448.5,489.4 450.6,493.4 452.7,497.3 454.8,501.2 457,504.9 459.1,508.6 461.2,512.3 463.4,515.8 465.6,519.3 467.7,522.8 469.9,526.2 472.1,529.5 474.3,532.8 476.5,536 478.7,539.2 480.9,542.3 483.1,545.4 485.3,548.4 487.6,551.4 489.8,554.3 492,557.2 494.2,560 496.4,562.9 498.7,565.6 500.9,568.4 503.1,571.1 505.3,573.7 507.5,576.3 509.8,578.9 512,581.5 514.2,584 516.4,586.5 518.6,589 520.8,591.4 523,593.8 525.2,596.2 527.4,598.5 529.6,600.8 531.8,603.1 534,605.4 536.1,607.6 538.3,609.8 540.5,612 542.7,614.2 544.9,616.3 547,618.4 549.2,620.5 551.4,622.5 553.6,624.6 555.7,626.6 557.9,628.5 560.1,630.5 562.2,632.4 564.4,634.4 566.5,636.2 568.7,638.1 570.9,640 573,641.8 575.2,643.6 577.3,645.4 579.5,647.2 581.6,648.9 583.7,650.7 585.9,652.4 588,654.1 590.1,655.8 592.3,657.4 594.4,659.1 596.5,660.7 598.6,662.3 600.7,663.9 602.8,665.5 604.9,667.1 607,668.6 609.1,670.2 611.2,671.7 613.3,673.2 615.4,674.7 617.5,676.2 619.6,677.7 621.6,679.1 623.7,680.6 625.8,682 627.8,683.4 629.9,684.9 631.9,686.3 633.9,687.7 636,689.1 638,690.4 640,691.8 642,693.2 644,694.5 646,695.8 648,697.2 650,698.5 652,699.8 654,701.1 656,702.4 657.9,703.7 659.9,705 661.9,706.2 663.8,707.5 665.8,708.7 667.7,710 669.7,711.2 671.6,712.4 673.6,713.6 675.5,714.8 677.4,716 679.4,717.2 681.3,718.3 683.2,719.5 685.2,720.6 687.1,721.8 689,722.9 690.9,724 692.8,725.1 694.7,726.2 696.7,727.3 698.6,728.4 700.5,729.5 702.4,730.5 704.3,731.6 706.2,732.6 708.1,733.6 710,734.6 711.9,735.6 713.9,736.6 715.8,737.6 717.7,738.6 719.6,739.6 721.5,740.5 723.4,741.4 725.3,742.4 727.2,743.3 729.1,744.2 731.1,745.1 733,746 734.9,746.9 736.8,747.8 738.7,748.6 740.6,749.5"/>
<polyline fill="none" stroke="#800000" stroke-width="1" points="479,50.5 476.1,59.5 473.2,68.4 470.4,77 467.8,85.5 465.3,93.7 462.9,101.7 460.7,109.6 458.6,117.2 456.6,124.6 454.8,131.7 453.2,138.7 451.7,145.5 450.3,152.1 449,158.4 447.9,164.7 446.8,170.7 445.9,176.7 445,182.4 444.2,188.1 443.5,193.6 442.9,199 442.3,204.3 441.8,209.6 441.3,214.7 440.9,219.7 440.5,224.6 440.1,229.4 439.8,234.2 439.6,238.8 439.4,243.4 439.2,247.9 439.1,252.3 439,256.7 438.9,261 438.9,265.2 438.9,269.4 438.9,273.5 439,277.5 439.1,281.4 439.2,285.4 439.3,289.2 439.5,293 439.7,296.7 439.9,300.4 440.1,304.1 440.4,307.6 440.7,311.2 440.9,314.7 441.3,318.1 441.6,321.5 442.5,329.8 443.5,337.8 444.6,345.6 445.8,353.2 447.1,360.5 448.4,367.6 449.8,374.5 451.3,381.3 452.9,387.8 454.5,394.2 456.2,400.4 457.9,406.4 459.7,412.3 461.5,418 463.4,423.6 465.3,429 467.2,434.3 469.2,439.5 471.2,444.6 473.3,449.5 475.3,454.3 477.4,459.1 479.6,463.7 481.7,468.2 483.9,472.6 486.1,476.9 488.3,481.2 490.6,485.3 492.8,489.4 495.1,493.4 497.3,497.3 499.6,501.2 501.9,504.9 504.3,508.6 506.6,512.3 508.9,515.8 511.2,519.3 513.6,522.8 515.9,526.2 518.3,529.5 520.6,532.8 523,536 525.4,539.2 527.7,542.3 530.1,545.4 532.5,548.4 534.9,551.4 537.2,554.3 539.6,557.2 542,560 544.4,562.9 546.7,565.6 549.1,568.4 551.5,571.1 553.8,573.7 556.2,576.3 558.5,578.9 560.9,581.5 563.3,584 565.6,586.5 568,589 570.3,591.4 572.6,593.8 575,596.2 577.3,598.5 579.6,600.8 582,603.1 584.3,605.4 586.6,607.6 588.9,609.8 591.2,612 593.5,614.2 595.8,616.3 598.1,618.4 600.4,620.5 602.7,622.5 605,624.6 607.3,626.6 609.6,628.5 611.9,630.5 614.2,632.4 616.5,634.4 618.8,636.2 621,638.1 623.3,640 625.6,641.8 627.9,643.6 630.1,645.4 632.4,647.2 634.7,648.9 636.9,650.7 639.2,652.4 641.4,654.1 643.6,655.8 645.9,657.4 648.1,659.1 650.4,660.7 652.6,662.3 654.8,663.9 657,665.5 659.2,667.1 661.5,668.6 663.7,670.2 665.9,671.7 668.1,673.2 670.3,674.7 672.4,676.2 674.6,677.7 676.8,679.1 679,680.6 681.1,682 683.3,683.4 685.4,684.9 687.6,686.3 689.7,687.7 691.9,689.1 694,690.4 696.1,691.8 698.2,693.2 700.3,694.5 702.4,695.8 704.5,697.2 706.6,698.5 708.7,699.8 710.8,701.1 712.9,702.4 714.9,703.7 717,705 719.1,706.2 721.1,707.5 723.2,708.7 725.2,710 727.2,711.2 729.3,712.4 731.3,713.6 733.4,714.8 735.4,716 737.4,717.2 739.4,718.3 741.4,719.5 743.5,720.6 745.5,721.8 747.5,722.9 749.5,724 751.5,725.1 753.5,726.2 755.5,727.3 757.5,728.4 759.5,729.5 761.5,730.5 763.5,731.6 765.5,732.6 767.5,733.6 769.5,734.6 771.5,735.6 773.5,736.6 775.5,737.6 777.5,738.6 779.5,739.6 781.5,740.5 783.5,741.4 785.5,742.4 787.5,743.3 789.5,744.2 791.5,745.1 793.5,746 795.5,746.9 797.4,747.8 799.4,748.6 801.4,749.5"/>
<polyline fill="none" stroke="#800000" stroke-width="1" points="510.1,50.5 507.3,59.5 504.6,68.4 502,77 499.5,85.5 497.2,93.7 495,101.7 492.9,109.6 491,117.2 489.2,124.6 487.6,131.7 486.1,138.7 484.7,145.5 483.5,152.1 482.4,158.4 481.4,164.7 480.5,170.7 479.7,176.7 478.9,182.4 478.3,188.1 477.7,193.6 477.2,199 476.8,204.3 476.4,209.6 476,214.7 475.7,219.7 475.5,224.6 475.3,229.4 475.1,234.2 475,238.8 474.9,243.4 474.9,247.9 474.9,252.3 474.9,256.7 475,261 475.1,265.2 475.2,269.4 475.3,273.5 475.5,277.5 475.7,281.4 475.9,285.4 476.2,289.2 476.5,293 476.8,296.7 477.1,300.4 477.5,304.1 477.8,307.6 478.2,311.2 478.6,314.7 479,318.1 479.5,321.5 480.6,329.8 481.9,337.8 483.3,345.6 484.7,353.2 486.2,360.5 487.8,367.6 489.5,374.5 491.2,381.3 493,387.8 494.9,394.2 496.8,400.4 498.7,406.4 500.7,412.3 502.8,418 504.9,423.6 507,429 509.1,434.3 511.3,439.5 513.5,444.6 515.8,449.5 518.1,454.3 520.4,459.1 522.7,463.7 525,468.2 527.4,472.6 529.8,476.9 532.2,481.2 534.6,485.3 537.1,489.4 539.5,493.4 542,497.3 544.4,501.2 546.9,504.9 549.4,508.6 551.9,512.3 554.4,515.8 556.9,519.3 559.4,522.8 561.9,526.2 564.5,529.5 567,532.8 569.5,536 572,539.2 574.6,542.3 577.1,545.4 579.6,548.4 582.2,551.4 584.7,554.3 587.2,557.2 589.7,560 592.3,562.9 594.8,565.6 597.3,568.4 599.8,571.1 602.3,573.7 604.8,576.3 607.3,578.9 609.8,581.5 612.3,584 614.8,586.5 617.3,589 619.8,591.4 622.3,593.8 624.7,596.2 627.2,598.5 629.7,600.8 632.1,603.1 634.6,605.4 637,607.6 639.5,609.8 641.9,612 644.4,614.2 646.8,616.3 649.2,618.4 651.7,620.5 654.1,622.5 656.5,624.6 658.9,626.6 661.4,628.5 663.8,630.5 666.2,632.4 668.6,634.4 671,636.2 673.4,638.1 675.8,640 678.2,641.8 680.6,643.6 682.9,645.4 685.3,647.2 687.7,648.9 690.1,650.7 692.4,652.4 694.8,654.1 697.2,655.8 699.5,657.4 701.9,659.1 704.2,660.7 706.6,662.3 708.9,663.9 711.2,665.5 713.5,667.1 715.9,668.6 718.2,670.2 720.5,671.7 722.8,673.2 725.1,674.7 727.4,676.2 729.7,677.7 732,679.1 734.2,680.6 736.5,682 738.8,683.4 741,684.9 743.3,686.3 745.5,687.7 747.8,689.1 750,690.4 752.2,691.8 754.4,693.2 756.6,694.5 758.8,695.8 761,697.2 763.2,698.5 765.4,699.8 767.6,701.1 769.8,702.4 771.9,703.7 774.1,705 776.2,706.2 778.4,707.5 780.5,708.7 782.7,710 784.8,711.2 786.9,712.4 789.1,713.6 791.2,714.8 793.3,716 795.4,717.2 797.6,718.3 799.7,719.5 801.8,720.6 803.9,721.8 806,722.9 808.1,724 810.2,725.1 812.3,726.2 814.4,727.3 816.5,728.4 818.6,729.5 820.6,730.5 822.7,731.6 824.8,732.6 826.9,733.6 829,734.6 831.1,735.6 833.2,736.6 835.2,737.6 837.3,738.6 839.4,739.6 841.5,740.5 843.6,741.4 845.7,742.4 847.8,743.3 849.8,744.2 851.9,745.1 854,746 856.1,746.9 858.1,747.8 860.2,748.6 862.2,749.5"/>
<polyline fill="none" stroke="#800000" stroke-width="1" points="541.2,50.5 538.6,59.5 536,68.4 533.6,77 531.3,85.5 529.1,93.7 527.1,101.7 525.2,109.6 523.4,117.2 521.8,124.6 520.3,131.7 519,138.7 517.8,145.5 516.7,152.1 515.7,158.4 514.9,164.7 514.1,170.7 513.5,176.7 512.9,182.4 512.4,188.1 511.9,193.6 511.6,199 511.3,204.3 511,209.6 510.8,214.7 510.6,219.7 510.5,224.6 510.5,229.4 510.4,234.2 510.4,238.8 510.5,243.4 510.6,247.9 510.7,252.3 510.8,256.7 511,261 511.2,265.2 511.5,269.4 511.7,273.5 512,277.5 512.4,281.4 512.7,285.4 513.1,289.2 513.5,293 513.9,296.7 514.3,300.4 514.8,304.1 515.3,307.6 515.8,311.2 516.3,314.7 516.8,318.1 517.4,321.5 518.8,329.8 520.3,337.8 522,345.6 523.7,353.2 525.4,360.5 527.3,367.6 529.2,374.5 531.2,381.3 533.2,387.8 535.3,394.2 537.4,400.4 539.6,406.4 541.8,412.3 544,418 546.3,423.6 548.7,429 551,434.3 553.4,439.5 555.9,444.6 558.3,449.5 560.8,454.3 563.3,459.1 565.8,463.7 568.4,468.2 570.9,472.6 573.5,476.9 576.1,481.2 578.7,485.3 581.3,489.4 584,493.4 586.6,497.3 589.3,501.2 591.9,504.9 594.6,508.6 597.2,512.3 599.9,515.8 602.6,519.3 605.3,522.8 608,526.2 610.6,529.5 613.3,532.8 616,536 618.7,539.2 621.4,542.3 624.1,545.4 626.8,548.4 629.5,551.4 632.1,554.3 634.8,557.2 637.5,560 640.2,562.9 642.8,565.6 645.5,568.4 648.2,571.1 650.8,573.7 653.5,576.3 656.1,578.9 658.8,581.5 661.4,584 664,586.5 666.7,589 669.3,591.4 671.9,593.8 674.5,596.2 677.1,598.5 679.7,600.8 682.3,603.1 684.9,605.4 687.5,607.6 690.1,609.8 692.6,612 695.2,614.2 697.8,616.3 700.3,618.4 702.9,620.5 705.4,622.5 708,624.6 710.5,626.6 713.1,628.5 715.6,630.5 718.2,632.4 720.7,634.4 723.2,636.2 725.7,638.1 728.2,640 730.8,641.8 733.3,643.6 735.8,645.4 738.3,647.2 740.8,648.9 743.2,650.7 745.7,652.4 748.2,654.1 750.7,655.8 753.1,657.4 755.6,659.1 758.1,660.7 760.5,662.3 763,663.9 765.4,665.5 767.8,667.1 770.3,668.6 772.7,670.2 775.1,671.7 777.5,673.2 779.9,674.7 782.3,676.2 784.7,677.7 787.1,679.1 789.5,680.6 791.9,682 794.2,683.4 796.6,684.9 799,686.3 801.3,687.7 803.6,689.1 806,690.4 808.3,691.8 810.6,693.2 812.9,694.5 815.2,695.8 817.5,697.2 819.8,698.5 822.1,699.8 824.4,701.1 826.6,702.4 828.9,703.7 831.2,705 833.4,706.2 835.7,707.5 837.9,708.7 840.1,710 842.4,711.2 844.6,712.4 846.8,713.6 849.1,714.8 851.3,716 853.5,717.2 855.7,718.3 857.9,719.5 860.1,720.6 862.3,721.8 864.5,722.9 866.7,724 868.9,725.1 871,726.2 873.2,727.3 875.4,728.4 877.6,729.5 879.8,730.5 882,731.6 884.1,732.6 886.3,733.6 888.5,734.6 890.6,735.6 892.8,736.6 895,737.6 897.2,738.6 899.3,739.6 901.5,740.5 903.7,741.4 905.8,742.4 908,743.3 910.2,744.2 912.3,745.1 914.5,746 916.6,746.9 918.8,747.8 920.9,748.6 923.1,749.5"/>
<polyline fill="none" stroke="#800000" stroke-width="1" points="572.3,50.5 569.8,59.5 567.5,68.4 565.2,77 563.1,85.5 561.1,93.7 559.2,101.7 557.4,109.6 555.8,117.2 554.4,124.6 553,131.7 551.8,138.7 550.8,145.5 549.9,152.1 549.1,158.4 548.4,164.7 547.8,170.7 547.2,176.7 546.8,182.4 546.4,188.1 546.2,193.6 545.9,199 545.8,204.3 545.6,209.6 545.6,214.7 545.5,219.7 545.6,224.6 545.6,229.4 545.7,234.2 545.8,238.8 546,243.4 546.2,247.9 546.5,252.3 546.7,256.7 547.1,261 547.4,265.2 547.8,269.4 548.1,273.5 548.6,277.5 549,281.4 549.5,285.4 550,289.2 550.5,293 551,296.7 551.5,300.4 552.1,304.1 552.7,307.6 553.3,311.2 553.9,314.7 554.6,318.1 555.2,321.5 556.9,329.8 558.7,337.8 560.6,345.6 562.6,353.2 564.6,360.5 566.7,367.6 568.9,374.5 571.1,381.3 573.3,387.8 575.6,394.2 578,400.4 580.4,406.4 582.8,412.3 585.3,418 587.8,423.6 590.4,429 593,434.3 595.6,439.5 598.2,444.6 600.9,449.5 603.5,454.3 606.2,459.1 609,463.7 611.7,468.2 614.5,472.6 617.2,476.9 620,481.2 622.8,485.3 625.6,489.4 628.4,493.4 631.2,497.3 634.1,501.2 636.9,504.9 639.7,508.6 642.6,512.3 645.4,515.8 648.3,519.3 651.1,522.8 654,526.2 656.8,529.5 659.7,532.8 662.5,536 665.4,539.2 668.2,542.3 671.1,545.4 673.9,548.4 676.8,551.4 679.6,554.3 682.4,557.2 685.3,560 688.1,562.9 690.9,565.6 693.7,568.4 696.5,571.1 699.3,573.7 702.1,576.3 704.9,578.9 707.7,581.5 710.5,584 713.3,586.5 716,589 718.8,591.4 721.5,593.8 724.3,596.2 727,598.5 729.8,600.8 732.5,603.1 735.2,605.4 737.9,607.6 740.6,609.8 743.4,612 746.1,614.2 748.7,616.3 751.4,618.4 754.1,620.5 756.8,622.5 759.5,624.6 762.1,626.6 764.8,628.5 767.5,630.5 770.1,632.4 772.8,634.4 775.4,636.2 778.1,638.1 780.7,640 783.3,641.8 786,643.6 788.6,645.4 791.2,647.2 793.8,648.9 796.4,650.7 799,652.4 801.6,654.1 804.2,655.8 806.8,657.4 809.3,659.1 811.9,660.7 814.5,662.3 817,663.9 819.6,665.5 822.1,667.1 824.7,668.6 827.2,670.2 829.7,671.7 832.3,673.2 834.8,674.7 837.3,676.2 839.8,677.7 842.3,679.1 844.8,680.6 847.2,682 849.7,683.4 852.2,684.9 854.6,686.3 857.1,687.7 859.5,689.1 862,690.4 864.4,691.8 866.8,693.2 869.2,694.5 871.6,695.8 874,697.2 876.4,698.5 878.8,699.8 881.2,701.1 883.5,702.4 885.9,703.7 888.3,705 890.6,706.2 892.9,707.5 895.3,708.7 897.6,710 899.9,711.2 902.3,712.4 904.6,713.6 906.9,714.8 909.2,716 911.5,717.2 913.8,718.3 916.1,719.5 918.4,720.6 920.7,721.8 923,722.9 925.3,724 927.5,725.1 929.8,726.2 932.1,727.3 934.4,728.4 936.6,729.5 938.9,730.5 941.2,731.6 943.4,732.6 945.7,733.6 948,734.6 950.2,735.6 952.5,736.6 954.7,737.6 957,738.6 959.2,739.6 961.5,740.5 963.8,741.4 966,742.4 968.3,743.3 970.5,744.2 972.8,745.1 975,746 977.2,746.9 979.5,747.8 981.7,748.6 983.9,749.5"/>
<polyline fill="none" stroke="#000080" stroke-width="1" points="71.1,749.5 69.9,748.5 68.8,747.4 67.6,746.3 66.5,745.3 65.3,744.2 64.2,743.1 63,742 61.9,740.9 60.7,739.7 59.6,738.6 58.5,737.4 57.4,736.2 56.2,735 55.1,733.8 54,732.6 52.9,731.4 51.8,730.1 50.7,728.8 49.6,727.5 48.5,726.2 47.5,724.9 46.4,723.6 45.3,722.2 44.2,720.9 43.1,719.5 42.1,718.1 41,716.7 39.9,715.3 38.8,713.9 37.8,712.4 36.7,710.9 35.6,709.5 34.6,708 33.5,706.5 32.5,705 31.4,703.4 30.3,701.9 29.3,700.3 28.2,698.8 27.1,697.2 26.1,695.6 25,694 23.9,692.3 22.8,690.7 21.8,689.1 20.7,687.4 19.6,685.7 18.5,684 17.5,682.3 16.4,680.6 15.3,678.8 14.2,677.1 13.1,675.3 12.1,673.5 11,671.7 9.9,669.9 8.9,668 7.8,666.1 6.7,664.2 5.7,662.3 4.6,660.4 3.6,658.4 2.5,656.4 1.5,654.4 0.4,652.4 -0.6,650.3 -1.6,648.2 -2.7,646.1 -3.7,644 -4.7,641.8 -5.7,639.6 -6.7,637.4 -7.7,635.1 -8.6,632.8 -9.6,630.5 -10.6,628.1 -11.5,625.8 -12.5,623.3 -13.4,620.9 -14.3,618.4 -15.2,615.9 -16.1,613.3 -17,610.7 -17.9,608.1 -18.8,605.4 -19.6,602.7 -20.5,599.9 -21.3,597.1 -22.2,594.3 -23,591.4 -23.8,588.5 -24.6,585.5 -25.3,582.5 -26.1,579.4 -26.9,576.3 -27.6,573.2 -28.3,570 -29,566.7 -29.7,563.4 -30.4,560 -31.1,556.6 -31.7,553.1 -32.3,549.6 -32.9,546 -33.4,542.3 -34,538.5 -34.5,534.7 -35,530.8 -35.4,526.8 -35.8,522.8 -36.2,518.6 -36.5,514.4 -36.8,510.1 -37.1,505.7 -37.3,501.2 -37.5,496.5 -37.6,491.8 -37.7,487 -37.7,482 -37.7,476.9 -37.5,471.7 -37.4,466.4 -37.1,460.9 -36.8,455.3 -36.4,449.5 -35.9,443.6 -35.3,437.4 -34.7,431.1 -33.9,424.7 -33,418 -32,411.1 -30.9,404 -29.7,396.7 -28.3,389.1 -26.8,381.3 -25.1,373.2 -23.3,364.8 -21.3,356.1 -19.1,347.2 -16.7,337.8 -14.1,328.2 -12,320.7 -11.3,318.1 -10.5,315.5 -9.7,312.9 -9,310.3 -8.2,307.6 -7.4,305 -6.5,302.2 -5.7,299.5 -4.8,296.7 -3.9,293.9 -3,291.1 -2.7,290.2"/>
<polyline fill="none" stroke="#000080" stroke-width="1" points="131.6,749.5 130.4,748.5 129.2,747.4 127.9,746.3 126.7,745.3 125.5,744.2 124.3,743.1 123.1,742 121.9,740.9 120.7,739.7 119.5,738.6 118.3,737.4 117.1,736.2 115.9,735 114.7,733.8 113.6,732.6 112.4,731.4 111.2,730.1 110,728.8 108.9,727.5 107.7,726.2 106.5,724.9 105.4,723.6 104.2,722.2 103,720.9 101.9,719.5 100.7,718.1 99.6,716.7 98.4,715.3 97.2,713.9 96.1,712.4 94.9,710.9 93.8,709.5 92.6,708 91.4,706.5 90.3,705 89.1,703.4 88,701.9 86.8,700.3 85.6,698.8 84.4,697.2 83.3,695.6 82.1,694 80.9,692.3 79.7,690.7 78.5,689.1 77.4,687.4 76.2,685.7 75,684 73.8,682.3 72.6,680.6 71.4,678.8 70.2,677.1 69,675.3 67.8,673.5 66.6,671.7 65.4,669.9 64.2,668 63,666.1 61.8,664.2 60.6,662.3 59.5,660.4 58.3,658.4 57.1,656.4 55.9,654.4 54.7,652.4 53.6,650.3 52.4,648.2 51.3,646.1 50.1,644 49,641.8 47.8,639.6 46.7,637.4 45.5,635.1 44.4,632.8 43.3,630.5 42.2,628.1 41.1,625.8 40,623.3 38.9,620.9 37.8,618.4 36.8,615.9 35.7,613.3 34.7,610.7 33.6,608.1 32.6,605.4 31.6,602.7 30.6,599.9 29.6,597.1 28.6,594.3 27.6,591.4 26.6,588.5 25.6,585.5 24.7,582.5 23.7,579.4 22.8,576.3 21.9,573.2 21,570 20.1,566.7 19.2,563.4 18.4,560 17.5,556.6 16.7,553.1 15.9,549.6 15.1,546 14.4,542.3 13.7,538.5 13,534.7 12.3,530.8 11.6,526.8 11,522.8 10.4,518.6 9.9,514.4 9.4,510.1 8.9,505.7 8.4,501.2 8.1,496.5 7.7,491.8 7.4,487 7.2,482 7,476.9 6.9,471.7 6.8,466.4 6.8,460.9 6.9,455.3 7,449.5 7.3,443.6 7.6,437.4 8,431.1 8.5,424.7 9.1,418 9.9,411.1 10.7,404 11.7,396.7 12.8,389.1 14,381.3 15.4,373.2 16.9,364.8 18.6,356.1 20.5,347.2 22.6,337.8 24.8,328.2 26.7,320.7 27.3,318.1 28,315.5 28.7,312.9 29.4,310.3 30.1,307.6 30.8,305 31.6,302.2 32.3,299.5 33.1,296.7 33.9,293.9 34.7,291.1 35.6,288.2 36.4,285.4 37.3,282.4 38.2,279.5 39.1,276.5 40,273.5 41,270.4 42,267.3 43,264.2 44,261 45.1,257.8 46.2,254.5 47.3,251.2 48.4,247.9 49.6,244.5 50.8,241.1 52,237.7 53.2,234.2"/>
<polyline fill="none" stroke="#000080" stroke-width="1" points="191.6,749.5 190.4,748.5 189.2,747.4 188,746.3 186.8,745.3 185.6,744.2 184.3,743.1 183.1,742 181.9,740.9 180.7,739.7 179.5,738.6 178.3,737.4 177.1,736.2 175.8,735 174.6,733.8 173.4,732.6 172.2,731.4 171,730.1 169.8,728.8 168.6,727.5 167.4,726.2 166.2,724.9 165,723.6 163.8,722.2 162.6,720.9 161.3,719.5 160.1,718.1 158.9,716.7 157.7,715.3 156.5,713.9 155.3,712.4 154.1,710.9 152.8,709.5 151.6,708 150.4,706.5 149.1,705 147.9,703.4 146.7,701.9 145.4,700.3 144.2,698.8 142.9,697.2 141.7,695.6 140.4,694 139.1,692.3 137.9,690.7 136.6,689.1 135.3,687.4 134,685.7 132.7,684 131.4,682.3 130.2,680.6 128.9,678.8 127.6,677.1 126.3,675.3 125,673.5 123.6,671.7 122.3,669.9 121,668 119.7,666.1 118.4,664.2 117.1,662.3 115.8,660.4 114.5,658.4 113.2,656.4 111.9,654.4 110.6,652.4 109.3,650.3 108,648.2 106.7,646.1 105.4,644 104.1,641.8 102.9,639.6 101.6,637.4 100.3,635.1 99.1,632.8 97.8,630.5 96.5,628.1 95.3,625.8 94,623.3 92.8,620.9 91.6,618.4 90.4,615.9 89.1,613.3 87.9,610.7 86.7,608.1 85.5,605.4 84.4,602.7 83.2,599.9 82,597.1 80.9,594.3 79.7,591.4 78.6,588.5 77.4,585.5 76.3,582.5 75.2,579.4 74.1,576.3 73,573.2 71.9,570 70.8,566.7 69.8,563.4 68.7,560 67.7,556.6 66.7,553.1 65.7,549.6 64.7,546 63.7,542.3 62.8,538.5 61.9,534.7 61,530.8 60.2,526.8 59.3,522.8 58.5,518.6 57.8,514.4 57,510.1 56.3,505.7 55.7,501.2 55.1,496.5 54.5,491.8 54,487 53.5,482 53.1,476.9 52.7,471.7 52.4,466.4 52.2,460.9 52,455.3 51.9,449.5 51.9,443.6 51.9,437.4 52.1,431.1 52.3,424.7 52.7,418 53.1,411.1 53.7,404 54.3,396.7 55.1,389.1 56.1,381.3 57.1,373.2 58.4,364.8 59.7,356.1 61.3,347.2 63.1,337.8 65,328.2 66.6,320.7 67.2,318.1 67.8,315.5 68.3,312.9 69,310.3 69.6,307.6 70.2,305 70.9,302.2 71.5,299.5 72.2,296.7 72.9,293.9 73.7,291.1 74.4,288.2 75.2,285.4 76,282.4 76.8,279.5 77.6,276.5 78.4,273.5 79.3,270.4 80.2,267.3 81.1,264.2 82,261 83,257.8 84,254.5 85,251.2 86,247.9 87.1,244.5 88.2,241.1 89.3,237.7 90.5,234.2 91.6,230.6 92.8,227 94.1,223.4 95.4,219.7 96.7,215.9 98,212.1 99.4,208.3 100.8,204.3 102.3,200.4 103.8,196.4 105.3,192.3 106.9,188.1 108.5,183.9 110.2,179.6 111.4,176.7"/>
<polyline fill="none" stroke="#000080" stroke-width="1" points="251,749.5 249.9,748.5 248.7,747.4 247.6,746.3 246.5,745.3 245.3,744.2 244.2,743.1 243,742 241.9,740.9 240.7,739.7 239.6,738.6 238.4,737.4 237.3,736.2 236.1,735 235,733.8 233.8,732.6 232.6,731.4 231.5,730.1 230.3,728.8 229.1,727.5 228,726.2 226.8,724.9 225.6,723.6 224.4,722.2 223.3,720.9 222.1,719.5 220.9,718.1 219.7,716.7 218.5,715.3 217.3,713.9 216.1,712.4 214.8,710.9 213.6,709.5 212.4,708 211.2,706.5 209.9,705 208.7,703.4 207.4,701.9 206.2,700.3 204.9,698.8 203.6,697.2 202.3,695.6 201,694 199.7,692.3 198.4,690.7 197.1,689.1 195.8,687.4 194.4,685.7 193.1,684 191.8,682.3 190.4,680.6 189.1,678.8 187.7,677.1 186.3,675.3 185,673.5 183.6,671.7 182.2,669.9 180.8,668 179.4,666.1 178,664.2 176.6,662.3 175.2,660.4 173.8,658.4 172.4,656.4 171,654.4 169.6,652.4 168.2,650.3 166.8,648.2 165.4,646.1 164,644 162.6,641.8 161.2,639.6 159.8,637.4 158.4,635.1 157,632.8 155.6,630.5 154.2,628.1 152.9,625.8 151.5,623.3 150.1,620.9 148.7,618.4 147.4,615.9 146,613.3 144.6,610.7 143.3,608.1 141.9,605.4 140.6,602.7 139.2,599.9 137.9,597.1 136.6,594.3 135.3,591.4 133.9,588.5 132.6,585.5 131.3,582.5 130,579.4 128.7,576.3 127.4,573.2 126.2,570 124.9,566.7 123.7,563.4 122.4,560 121.2,556.6 120,553.1 118.8,549.6 117.6,546 116.4,542.3 115.3,538.5 114.2,534.7 113.1,530.8 112,526.8 110.9,522.8 109.9,518.6 108.9,514.4 108,510.1 107,505.7 106.1,501.2 105.3,496.5 104.5,491.8 103.7,487 103,482 102.3,476.9 101.7,471.7 101.1,466.4 100.6,460.9 100.2,455.3 99.8,449.5 99.5,443.6 99.3,437.4 99.1,431.1 99.1,424.7 99.1,418 99.3,411.1 99.5,404 99.9,396.7 100.4,389.1 101,381.3 101.8,373.2 102.7,364.8 103.7,356.1 104.9,347.2 106.3,337.8 107.9,328.2 109.3,320.7 109.7,318.1 110.2,315.5 110.7,312.9 111.2,310.3 111.8,307.6 112.3,305 112.9,302.2 113.4,299.5 114,296.7 114.6,293.9 115.3,291.1 115.9,288.2 116.6,285.4 117.3,282.4 118,279.5 118.7,276.5 119.4,273.5 120.2,270.4 121,267.3 121.8,264.2 122.6,261 123.5,257.8 124.4,254.5 125.3,251.2 126.2,247.9 127.2,244.5 128.2,241.1 129.2,237.7 130.2,234.2 131.3,230.6 132.4,227 133.5,223.4 134.7,219.7 135.9,215.9 137.1,212.1 138.4,208.3 139.7,204.3 141,200.4 142.4,196.4 143.8,192.3 145.3,188.1 146.8,183.9 148.4,179.6 150,175.2 151.7,170.7 153.4,166.2 155.2,161.6 157.1,156.9 159,152.1 161,147.1 163.1,142.1 165.3,137 167.6,131.7 170,126.4 172.4,120.9 175,115.3 176.7,111.5"/>
<polyline fill="none" stroke="#000080" stroke-width="1" points="309.6,749.5 308.6,748.5 307.7,747.4 306.7,746.3 305.7,745.3 304.8,744.2 303.8,743.1 302.8,742 301.8,740.9 300.8,739.7 299.9,738.6 298.9,737.4 297.9,736.2 296.9,735 295.9,733.8 294.9,732.6 293.9,731.4 292.9,730.1 291.9,728.8 290.8,727.5 289.8,726.2 288.8,724.9 287.8,723.6 286.7,722.2 285.7,720.9 284.6,719.5 283.6,718.1 282.5,716.7 281.4,715.3 280.3,713.9 279.2,712.4 278.1,710.9 277,709.5 275.9,708 274.8,706.5 273.7,705 272.5,703.4 271.3,701.9 270.2,700.3 269,698.8 267.8,697.2 266.6,695.6 265.4,694 264.2,692.3 262.9,690.7 261.7,689.1 260.4,687.4 259.1,685.7 257.8,684 256.5,682.3 255.2,680.6 253.9,678.8 252.6,677.1 251.2,675.3 249.9,673.5 248.5,671.7 247.1,669.9 245.8,668 244.4,666.1 243,664.2 241.6,662.3 240.2,660.4 238.8,658.4 237.3,656.4 235.9,654.4 234.5,652.4 233,650.3 231.6,648.2 230.1,646.1 228.7,644 227.2,641.8 225.7,639.6 224.3,637.4 222.8,635.1 221.3,632.8 219.8,630.5 218.4,628.1 216.9,625.8 215.4,623.3 213.9,620.9 212.4,618.4 210.9,615.9 209.4,613.3 208,610.7 206.5,608.1 205,605.4 203.5,602.7 202,599.9 200.5,597.1 199,594.3 197.6,591.4 196.1,588.5 194.6,585.5 193.1,582.5 191.7,579.4 190.2,576.3 188.7,573.2 187.3,570 185.8,566.7 184.3,563.4 182.9,560 181.5,556.6 180,553.1 178.6,549.6 177.2,546 175.9,542.3 174.5,538.5 173.1,534.7 171.8,530.8 170.5,526.8 169.2,522.8 167.9,518.6 166.7,514.4 165.5,510.1 164.3,505.7 163.1,501.2 162,496.5 160.9,491.8 159.9,487 158.9,482 157.9,476.9 157,471.7 156.2,466.4 155.4,460.9 154.6,455.3 153.9,449.5 153.3,443.6 152.8,437.4 152.4,431.1 152,424.7 151.7,418 151.5,411.1 151.4,404 151.4,396.7 151.6,389.1 151.8,381.3 152.2,373.2 152.7,364.8 153.4,356.1 154.2,347.2 155.3,337.8 156.4,328.2 157.5,320.7 157.8,318.1 158.2,315.5 158.6,312.9 159,310.3 159.4,307.6 159.9,305 160.3,302.2 160.8,299.5 161.3,296.7 161.8,293.9 162.3,291.1 162.8,288.2 163.4,285.4 164,282.4 164.6,279.5 165.2,276.5 165.8,273.5 166.5,270.4 167.1,267.3 167.8,264.2 168.5,261 169.3,257.8 170,254.5 170.8,251.2 171.6,247.9 172.5,244.5 173.3,241.1 174.2,237.7 175.2,234.2 176.1,230.6 177.1,227 178.1,223.4 179.1,219.7 180.2,215.9 181.3,212.1 182.4,208.3 183.6,204.3 184.8,200.4 186,196.4 187.3,192.3 188.7,188.1 190.1,183.9 191.5,179.6 193,175.2 194.5,170.7 196.1,166.2 197.8,161.6 199.5,156.9 201.3,152.1 203.2,147.1 205.1,142.1 207.2,137 209.3,131.7 211.5,126.4 213.8,120.9 216.2,115.3 218.7,109.6 221.3,103.7 224,97.8 226.7,91.7 229.6,85.5 232.5,79.2 235.5,72.7 238.6,66.2 241.7,59.5 244.9,52.8 246,50.5"/>
<polyline fill="none" stroke="#000080" stroke-width="1" points="367.5,749.5 366.8,748.5 366.1,747.4 365.4,746.3 364.7,745.3 363.9,744.2 363.2,743.1 362.5,742 361.7,740.9 361,739.7 360.3,738.6 359.5,737.4 358.8,736.2 358.1,735 357.3,733.8 356.6,732.6 355.9,731.4 355.1,730.1 354.4,728.8 353.6,727.5 352.8,726.2 352.1,724.9 351.3,723.6 350.5,722.2 349.8,720.9 349,719.5 348.2,718.1 347.4,716.7 346.6,715.3 345.7,713.9 344.9,712.4 344.1,710.9 343.2,709.5 342.4,708 341.5,706.5 340.6,705 339.7,703.4 338.8,701.9 337.9,700.3 337,698.8 336.1,697.2 335.1,695.6 334.1,694 333.2,692.3 332.2,690.7 331.2,689.1 330.1,687.4 329.1,685.7 328,684 327,682.3 325.9,680.6 324.8,678.8 323.7,677.1 322.5,675.3 321.4,673.5 320.2,671.7 319.1,669.9 317.9,668 316.7,666.1 315.5,664.2 314.2,662.3 313,660.4 311.7,658.4 310.5,656.4 309.2,654.4 307.9,652.4 306.6,650.3 305.3,648.2 303.9,646.1 302.6,644 301.2,641.8 299.9,639.6 298.5,637.4 297.1,635.1 295.7,632.8 294.3,630.5 292.8,628.1 291.4,625.8 290,623.3 288.5,620.9 287,618.4 285.6,615.9 284.1,613.3 282.6,610.7 281.1,608.1 279.6,605.4 278,602.7 276.5,599.9 275,597.1 273.4,594.3 271.9,591.4 270.3,588.5 268.7,585.5 267.1,582.5 265.5,579.4 264,576.3 262.4,573.2 260.7,570 259.1,566.7 257.5,563.4 255.9,560 254.3,556.6 252.7,553.1 251.1,549.6 249.5,546 247.9,542.3 246.3,538.5 244.7,534.7 243.2,530.8 241.6,526.8 240.1,522.8 238.5,518.6 237,514.4 235.5,510.1 234.1,505.7 232.6,501.2 231.2,496.5 229.8,491.8 228.5,487 227.1,482 225.9,476.9 224.6,471.7 223.4,466.4 222.3,460.9 221.2,455.3 220.2,449.5 219.2,443.6 218.3,437.4 217.4,431.1 216.7,424.7 216,418 215.4,411.1 214.9,404 214.5,396.7 214.2,389.1 214,381.3 214,373.2 214,364.8 214.3,356.1 214.6,347.2 215.1,337.8 215.8,328.2 216.5,320.7 216.7,318.1 217,315.5 217.2,312.9 217.5,310.3 217.8,307.6 218.1,305 218.4,302.2 218.8,299.5 219.1,296.7 219.5,293.9 219.9,291.1 220.3,288.2 220.7,285.4 221.2,282.4 221.6,279.5 222.1,276.5 222.6,273.5 223.1,270.4 223.6,267.3 224.2,264.2 224.7,261 225.3,257.8 226,254.5 226.6,251.2 227.3,247.9 227.9,244.5 228.7,241.1 229.4,237.7 230.2,234.2 231,230.6 231.8,227 232.6,223.4 233.5,219.7 234.4,215.9 235.4,212.1 236.4,208.3 237.4,204.3 238.4,200.4 239.5,196.4 240.6,192.3 241.8,188.1 243,183.9 244.3,179.6 245.6,175.2 247,170.7 248.4,166.2 249.9,161.6 251.4,156.9 253.1,152.1 254.8,147.1 256.5,142.1 258.4,137 260.3,131.7 262.4,126.4 264.5,120.9 266.7,115.3 269,109.6 271.4,103.7 273.9,97.8 276.5,91.7 279.1,85.5 281.8,79.2 284.6,72.7 287.5,66.2 290.5,59.5 293.5,52.8 294.5,50.5"/>
<polyline fill="none" stroke="#000080" stroke-width="1" points="425.2,749.5 424.8,748.5 424.4,747.4 423.9,746.3 423.5,745.3 423,744.2 422.6,743.1 422.1,742 421.7,740.9 421.2,739.7 420.8,738.6 420.3,737.4 419.9,736.2 419.4,735 419,733.8 418.6,732.6 418.1,731.4 417.7,730.1 417.2,728.8 416.8,727.5 416.4,726.2 415.9,724.9 415.5,723.6 415,722.2 414.6,720.9 414.1,719.5 413.7,718.1 413.2,716.7 412.8,715.3 412.3,713.9 411.9,712.4 411.4,710.9 410.9,709.5 410.4,708 409.9,706.5 409.4,705 408.9,703.4 408.4,701.9 407.9,700.3 407.3,698.8 406.8,697.2 406.2,695.6 405.7,694 405.1,692.3 404.5,690.7 403.9,689.1 403.3,687.4 402.7,685.7 402,684 401.4,682.3 400.7,680.6 400.1,678.8 399.4,677.1 398.7,675.3 398,673.5 397.3,671.7 396.5,669.9 395.8,668 395,666.1 394.3,664.2 393.5,662.3 392.7,660.4 391.9,658.4 391.1,656.4 390.2,654.4 389.4,652.4 388.5,650.3 387.6,648.2 386.7,646.1 385.8,644 384.9,641.8 384,639.6 383,637.4 382,635.1 381,632.8 380,630.5 379,628.1 378,625.8 376.9,623.3 375.9,620.9 374.8,618.4 373.7,615.9 372.5,613.3 371.4,610.7 370.2,608.1 369,605.4 367.8,602.7 366.6,599.9 365.4,597.1 364.1,594.3 362.8,591.4 361.5,588.5 360.1,585.5 358.8,582.5 357.4,579.4 356,576.3 354.5,573.2 353.1,570 351.6,566.7 350.1,563.4 348.6,560 347,556.6 345.5,553.1 343.9,549.6 342.3,546 340.7,542.3 339.1,538.5 337.5,534.7 335.8,530.8 334.2,526.8 332.5,522.8 330.9,518.6 329.2,514.4 327.5,510.1 325.9,505.7 324.2,501.2 322.6,496.5 320.9,491.8 319.3,487 317.7,482 316.1,476.9 314.5,471.7 313,466.4 311.4,460.9 310,455.3 308.5,449.5 307.1,443.6 305.8,437.4 304.5,431.1 303.3,424.7 302.1,418 301,411.1 300,404 299.1,396.7 298.2,389.1 297.5,381.3 296.9,373.2 296.3,364.8 296,356.1 295.7,347.2 295.6,337.8 295.6,328.2 295.8,320.7 295.9,318.1 295.9,315.5 296,312.9 296.1,310.3 296.3,307.6 296.4,305 296.5,302.2 296.7,299.5 296.9,296.7 297.1,293.9 297.3,291.1 297.5,288.2 297.7,285.4 298,282.4 298.3,279.5 298.6,276.5 298.9,273.5 299.2,270.4 299.5,267.3 299.9,264.2 300.3,261 300.7,257.8 301.1,254.5 301.5,251.2 302,247.9 302.5,244.5 303,241.1 303.6,237.7 304.1,234.2 304.7,230.6 305.3,227 306,223.4 306.7,219.7 307.4,215.9 308.1,212.1 308.9,208.3 309.7,204.3 310.5,200.4 311.4,196.4 312.3,192.3 313.2,188.1 314.2,183.9 315.2,179.6 316.3,175.2 317.5,170.7 318.7,166.2 319.9,161.6 321.3,156.9 322.7,152.1 324.1,147.1 325.7,142.1 327.3,137 329,131.7 330.8,126.4 332.6,120.9 334.6,115.3 336.7,109.6 338.8,103.7 341,97.8 343.3,91.7 345.7,85.5 348.2,79.2 350.7,72.7 353.3,66.2 356,59.5 358.7,52.8 359.6,50.5"/>
<polyline fill="none" stroke="#000080" stroke-width="1" points="483.3,749.5 483.1,748.5 482.8,747.4 482.6,746.3 482.4,745.3 482.2,744.2 482,743.1 481.8,742 481.6,740.9 481.4,739.7 481.2,738.6 481,737.4 480.8,736.2 480.6,735 480.5,733.8 480.3,732.6 480.1,731.4 480,730.1 479.8,728.8 479.7,727.5 479.5,726.2 479.4,724.9 479.3,723.6 479.1,722.2 479,720.9 478.9,719.5 478.7,718.1 478.6,716.7 478.5,715.3 478.3,713.9 478.2,712.4 478.1,710.9 478,709.5 477.8,708 477.7,706.5 477.6,705 477.4,703.4 477.3,701.9 477.2,700.3 477,698.8 476.9,697.2 476.7,695.6 476.6,694 476.4,692.3 476.3,690.7 476.1,689.1 475.9,687.4 475.8,685.7 475.6,684 475.4,682.3 475.2,680.6 475,678.8 474.8,677.1 474.6,675.3 474.4,673.5 474.2,671.7 474,669.9 473.8,668 473.6,666.1 473.4,664.2 473.2,662.3 472.9,660.4 472.7,658.4 472.5,656.4 472.2,654.4 472,652.4 471.7,650.3 471.5,648.2 471.2,646.1 471,644 470.7,641.8 470.4,639.6 470.2,637.4 469.9,635.1 469.6,632.8 469.3,630.5 469,628.1 468.7,625.8 468.4,623.3 468.1,620.9 467.8,618.4 467.4,615.9 467.1,613.3 466.7,610.7 466.4,608.1 466,605.4 465.6,602.7 465.2,599.9 464.8,597.1 464.4,594.3 463.9,591.4 463.5,588.5 463,585.5 462.5,582.5 462,579.4 461.4,576.3 460.8,573.2 460.3,570 459.6,566.7 459,563.4 458.3,560 457.7,556.6 456.9,553.1 456.2,549.6 455.4,546 454.6,542.3 453.8,538.5 453,534.7 452.1,530.8 451.2,526.8 450.2,522.8 449.2,518.6 448.2,514.4 447.2,510.1 446.1,505.7 445,501.2 443.8,496.5 442.7,491.8 441.5,487 440.2,482 439,476.9 437.7,471.7 436.4,466.4 435,460.9 433.7,455.3 432.3,449.5 430.9,443.6 429.6,437.4 428.2,431.1 426.8,424.7 425.4,418 424,411.1 422.7,404 421.4,396.7 420.1,389.1 418.8,381.3 417.7,373.2 416.5,364.8 415.5,356.1 414.5,347.2 413.7,337.8 412.9,328.2 412.4,320.7 412.3,318.1 412.1,315.5 412,312.9 411.9,310.3 411.8,307.6 411.7,305 411.6,302.2 411.5,299.5 411.5,296.7 411.4,293.9 411.4,291.1 411.4,288.2 411.4,285.4 411.4,282.4 411.4,279.5 411.4,276.5 411.5,273.5 411.5,270.4 411.6,267.3 411.7,264.2 411.8,261 411.9,257.8 412.1,254.5 412.3,251.2 412.4,247.9 412.7,244.5 412.9,241.1 413.1,237.7 413.4,234.2 413.7,230.6 414,227 414.4,223.4 414.8,219.7 415.2,215.9 415.6,212.1 416,208.3 416.5,204.3 417.1,200.4 417.6,196.4 418.2,192.3 418.8,188.1 419.5,183.9 420.2,179.6 421,175.2 421.8,170.7 422.6,166.2 423.6,161.6 424.5,156.9 425.6,152.1 426.7,147.1 427.9,142.1 429.1,137 430.5,131.7 431.9,126.4 433.4,120.9 435,115.3 436.7,109.6 438.5,103.7 440.3,97.8 442.2,91.7 444.2,85.5 446.3,79.2 448.4,72.7 450.6,66.2 452.9,59.5 455.2,52.8 456,50.5"/>
<polyline fill="none" stroke="#000080" stroke-width="1" points="541.8,749.5 541.8,748.5 541.7,747.4 541.7,746.3 541.6,745.3 541.6,744.2 541.6,743.1 541.5,742 541.5,740.9 541.5,739.7 541.5,738.6 541.5,737.4 541.5,736.2 541.5,735 541.6,733.8 541.6,732.6 541.6,731.4 541.7,730.1 541.8,728.8 541.8,727.5 541.9,726.2 542,724.9 542.1,723.6 542.1,722.2 542.2,720.9 542.3,719.5 542.5,718.1 542.6,716.7 542.7,715.3 542.8,713.9 542.9,712.4 543.1,710.9 543.2,709.5 543.3,708 543.5,706.5 543.6,705 543.8,703.4 543.9,701.9 544.1,700.3 544.2,698.8 544.4,697.2 544.5,695.6 544.7,694 544.8,692.3 545,690.7 545.2,689.1 545.3,687.4 545.5,685.7 545.6,684 545.8,682.3 546,680.6 546.2,678.8 546.3,677.1 546.5,675.3 546.7,673.5 546.9,671.7 547.1,669.9 547.3,668 547.5,666.1 547.7,664.2 547.9,662.3 548.1,660.4 548.3,658.4 548.5,656.4 548.8,654.4 549,652.4 549.2,650.3 549.5,648.2 549.7,646.1 550,644 550.3,641.8 550.6,639.6 550.8,637.4 551.1,635.1 551.4,632.8 551.8,630.5 552.1,628.1 552.4,625.8 552.7,623.3 553.1,620.9 553.4,618.4 553.8,615.9 554.2,613.3 554.5,610.7 554.9,608.1 555.3,605.4 555.7,602.7 556.1,599.9 556.5,597.1 556.9,594.3 557.4,591.4 557.8,588.5 558.2,585.5 558.7,582.5 559.1,579.4 559.6,576.3 560,573.2 560.5,570 560.9,566.7 561.4,563.4 561.9,560 562.4,556.6 562.9,553.1 563.4,549.6 563.9,546 564.4,542.3 564.9,538.5 565.5,534.7 566,530.8 566.5,526.8 567.1,522.8 567.6,518.6 568.2,514.4 568.8,510.1 569.4,505.7 570,501.2 570.5,496.5 571.1,491.8 571.7,487 572.4,482 573,476.9 573.6,471.7 574.2,466.4 574.8,460.9 575.5,455.3 576.1,449.5 576.7,443.6 577.3,437.4 578,431.1 578.6,424.7 579.2,418 579.8,411.1 580.3,404 580.9,396.7 581.4,389.1 581.9,381.3 582.4,373.2 582.8,364.8 583.2,356.1 583.6,347.2 583.9,337.8 584.1,328.2 584.3,320.7 584.4,318.1 584.4,315.5 584.4,312.9 584.5,310.3 584.5,307.6 584.6,305 584.6,302.2 584.7,299.5 584.7,296.7 584.7,293.9 584.8,291.1 584.8,288.2 584.8,285.4 584.9,282.4 584.9,279.5 584.9,276.5 585,273.5 585,270.4 585.1,267.3 585.1,264.2 585.2,261 585.2,257.8 585.3,254.5 585.3,251.2 585.4,247.9 585.5,244.5 585.6,241.1 585.6,237.7 585.7,234.2 585.9,230.6 586,227 586.1,223.4 586.2,219.7 586.4,215.9 586.6,212.1 586.7,208.3 586.9,204.3 587.1,200.4 587.4,196.4 587.6,192.3 587.9,188.1 588.2,183.9 588.6,179.6 589,175.2 589.4,170.7 589.8,166.2 590.3,161.6 590.9,156.9 591.5,152.1 592.1,147.1 592.9,142.1 593.6,137 594.5,131.7 595.4,126.4 596.4,120.9 597.5,115.3 598.6,109.6 599.9,103.7 601.1,97.8 602.5,91.7 603.9,85.5 605.4,79.2 606.9,72.7 608.5,66.2 610.2,59.5 611.9,52.8 612.5,50.5"/>
<polyline fill="none" stroke="#000080" stroke-width="1" points="600.8,749.5 600.9,748.5 601,747.4 601,746.3 601.1,745.3 601.2,744.2 601.3,743.1 601.4,742 601.5,740.9 601.6,739.7 601.7,738.6 601.8,737.4 602,736.2 602.1,735 602.3,733.8 602.4,732.6 602.6,731.4 602.8,730.1 603,728.8 603.2,727.5 603.4,726.2 603.6,724.9 603.8,723.6 604.1,722.2 604.3,720.9 604.6,719.5 604.8,718.1 605.1,716.7 605.4,715.3 605.6,713.9 605.9,712.4 606.2,710.9 606.5,709.5 606.8,708 607.1,706.5 607.4,705 607.7,703.4 608.1,701.9 608.4,700.3 608.7,698.8 609.1,697.2 609.4,695.6 609.8,694 610.1,692.3 610.5,690.7 610.8,689.1 611.2,687.4 611.6,685.7 611.9,684 612.3,682.3 612.7,680.6 613.1,678.8 613.5,677.1 613.9,675.3 614.3,673.5 614.7,671.7 615.1,669.9 615.6,668 616,666.1 616.5,664.2 616.9,662.3 617.4,660.4 617.9,658.4 618.4,656.4 618.9,654.4 619.4,652.4 619.9,650.3 620.5,648.2 621,646.1 621.6,644 622.2,641.8 622.8,639.6 623.4,637.4 624,635.1 624.7,632.8 625.3,630.5 626,628.1 626.7,625.8 627.4,623.3 628.1,620.9 628.8,618.4 629.6,615.9 630.3,613.3 631.1,610.7 631.9,608.1 632.8,605.4 633.6,602.7 634.5,599.9 635.3,597.1 636.2,594.3 637.2,591.4 638.1,588.5 639,585.5 640,582.5 641,579.4 642,576.3 643.1,573.2 644.1,570 645.2,566.7 646.3,563.4 647.5,560 648.6,556.6 649.8,553.1 651,549.6 652.3,546 653.6,542.3 654.9,538.5 656.2,534.7 657.6,530.8 659,526.8 660.5,522.8 662,518.6 663.5,514.4 665.1,510.1 666.8,505.7 668.4,501.2 670.2,496.5 672,491.8 673.8,487 675.7,482 677.7,476.9 679.7,471.7 681.8,466.4 684,460.9 686.2,455.3 688.5,449.5 690.9,443.6 693.4,437.4 696,431.1 698.7,424.7 701.4,418 704.3,411.1 707.3,404 710.4,396.7 713.6,389.1 716.9,381.3 720.3,373.2 723.9,364.8 727.6,356.1 731.4,347.2 735.4,337.8 739.6,328.2 742.8,320.7 743.9,318.1 745,315.5 746.1,312.9 747.3,310.3 748.4,307.6 749.6,305 750.7,302.2 751.9,299.5 753.1,296.7 754.3,293.9 755.5,291.1 756.7,288.2 757.9,285.4 759.2,282.4 760.5,279.5 761.7,276.5 763,273.5 764.3,270.4 765.6,267.3 767,264.2 768.3,261 769.7,257.8 771.1,254.5 772.5,251.2 773.9,247.9 775.3,244.5 776.7,241.1 778.2,237.7 779.7,234.2 781.2,230.6 782.7,227 784.2,223.4 785.7,219.7 787.3,215.9 788.9,212.1 790.5,208.3 792.1,204.3 793.8,200.4 795.4,196.4 797.1,192.3 798.8,188.1 800.6,183.9 802.3,179.6 804.1,175.2 806,170.7 807.8,166.2 809.8,161.6 811.7,156.9 813.7,152.1 815.7,147.1 817.8,142.1 820,137 822.1,131.7 824.4,126.4 826.7,120.9 829.1,115.3 831.5,109.6 833.9,103.7 836.4,97.8 838.9,91.7 841.5,85.5 844.1,79.2 846.7,72.7 849.4,66.2 852,59.5 854.7,52.8 855.6,50.5"/>
<polyline fill="none" stroke="#000080" stroke-width="1" points="660.3,749.5 660.4,748.5 660.6,747.4 660.7,746.3 660.8,745.3 661,744.2 661.1,743.1 661.3,742 661.4,740.9 661.6,739.7 661.8,738.6 662,737.4 662.2,736.2 662.4,735 662.7,733.8 662.9,732.6 663.1,731.4 663.4,730.1 663.7,728.8 663.9,727.5 664.2,726.2 664.5,724.9 664.8,723.6 665.1,722.2 665.5,720.9 665.8,719.5 666.1,718.1 666.5,716.7 666.8,715.3 667.2,713.9 667.6,712.4 667.9,710.9 668.3,709.5 668.7,708 669.1,706.5 669.5,705 669.9,703.4 670.3,701.9 670.8,700.3 671.2,698.8 671.6,697.2 672.1,695.6 672.5,694 673,692.3 673.4,690.7 673.9,689.1 674.4,687.4 674.8,685.7 675.3,684 675.8,682.3 676.3,680.6 676.8,678.8 677.3,677.1 677.8,675.3 678.4,673.5 678.9,671.7 679.5,669.9 680,668 680.6,666.1 681.2,664.2 681.8,662.3 682.4,660.4 683,658.4 683.6,656.4 684.3,654.4 684.9,652.4 685.6,650.3 686.3,648.2 687,646.1 687.7,644 688.4,641.8 689.2,639.6 690,637.4 690.7,635.1 691.6,632.8 692.4,630.5 693.2,628.1 694.1,625.8 695,623.3 695.9,620.9 696.8,618.4 697.7,615.9 698.7,613.3 699.7,610.7 700.7,608.1 701.7,605.4 702.8,602.7 703.8,599.9 704.9,597.1 706,594.3 707.2,591.4 708.4,588.5 709.6,585.5 710.8,582.5 712,579.4 713.3,576.3 714.6,573.2 715.9,570 717.3,566.7 718.7,563.4 720.1,560 721.5,556.6 723,553.1 724.6,549.6 726.1,546 727.8,542.3 729.4,538.5 731.1,534.7 732.8,530.8 734.6,526.8 736.5,522.8 738.4,518.6 740.3,514.4 742.3,510.1 744.4,505.7 746.5,501.2 748.7,496.5 751,491.8 753.3,487 755.8,482 758.2,476.9 760.8,471.7 763.5,466.4 766.3,460.9 769.1,455.3 772.1,449.5 775.2,443.6 778.3,437.4 781.6,431.1 785.1,424.7 788.6,418 792.3,411.1 796.2,404 800.2,396.7 804.4,389.1 808.7,381.3 813.2,373.2 817.9,364.8 822.9,356.1 828,347.2 833.4,337.8 839,328.2 843.4,320.7 844.9,318.1 846.4,315.5 847.9,312.9 849.4,310.3 851,307.6 852.6,305 854.2,302.2 855.8,299.5 857.5,296.7 859.1,293.9 860.8,291.1 862.5,288.2 864.3,285.4 866,282.4 867.8,279.5 869.6,276.5 871.4,273.5 873.3,270.4 875.1,267.3 877,264.2 879,261 880.9,257.8 882.9,254.5 884.9,251.2 887,247.9 889,244.5 891.1,241.1 893.3,237.7 895.4,234.2 897.6,230.6 899.9,227 902.1,223.4 904.4,219.7 906.8,215.9 909.2,212.1 911.6,208.3 914,204.3 916.5,200.4 919.1,196.4 921.7,192.3 924.3,188.1 927,183.9 929.7,179.6 932.6,175.2 935.4,170.7 938.4,166.2 941.3,161.6 944.4,156.9 947.6,152.1 950.8,147.1 954.1,142.1 957.5,137 961,131.7 964.6,126.4 968.3,120.9 972,115.3 975.9,109.6 979.9,103.7 984,97.8 988.1,91.7 992.3,85.5 996.7,79.2 1001.1,72.7 1005.6,66.2 1010.1,59.5 1014.8,52.8 1016.3,50.5"/>
<line x1="-607.5" y1="749.5" x2="91.5" y2="50.5" stroke="#fff" stroke-width="1"/>
<line x1="-547.5" y1="749.5" x2="151.5" y2="50.5" stroke="#fff" stroke-width="1"/>
<line x1="-487.5" y1="749.5" x2="211.5" y2="50.5" stroke="#fff" stroke-width="1"/>
<line x1="-427.5" y1="749.5" x2="271.5" y2="50.5" stroke="#fff" stroke-width="1"/>
<line x1="-367.5" y1="749.5" x2="331.5" y2="50.5" stroke="#fff" stroke-width="1"/>
<line x1="-307.5" y1="749.5" x2="391.5" y2="50.5" stroke="#fff" stroke-width="1"/>
<line x1="-247.5" y1="749.5" x2="451.5" y2="50.5" stroke="#fff" stroke-width="1"/>
<line x1="-187.5" y1="749.5" x2="511.5" y2="50.5" stroke="#fff" stroke-width="1"/>
<line x1="-127.5" y1="749.5" x2="571.5" y2="50.5" stroke="#fff" stroke-width="1"/>
<line x1="-67.5" y1="749.5" x2="631.5" y2="50.5" stroke="#fff" stroke-width="1"/>
<line x1="-7.5" y1="749.5" x2="691.5" y2="50.5" stroke="#fff" stroke-width="1"/>
<line x1="52.5" y1="749.5" x2="751.5" y2="50.5" stroke="#fff" stroke-width="1"/>
<line x1="112.5" y1="749.5" x2="811.5" y2="50.5" stroke="#fff" stroke-width="1"/>
<line x1="172.5" y1="749.5" x2="871.5" y2="50.5" stroke="#fff" stroke-width="1"/>
<line x1="232.5" y1="749.5" x2="931.5" y2="50.5" stroke="#fff" stroke-width="1"/>
<line x1="292.5" y1="749.5" x2="991.5" y2="50.5" stroke="#fff" stroke-width="1"/>
<line x1="352.5" y1="749.5" x2="1051.5" y2="50.5" stroke="#fff" stroke-width="1"/>
<line x1="412.5" y1="749.5" x2="1111.5" y2="50.5" stroke="#fff" stroke-width="1"/>
<line x1="472.5" y1="749.5" x2="1171.5" y2="50.5" stroke="#fff" stroke-width="1"/>
<line x1="532.5" y1="749.5" x2="1231.5" y2="50.5" stroke="#fff" stroke-width="1"/>
<line x1="592.5" y1="749.5" x2="1291.5" y2="50.5" stroke="#fff" stroke-width="1"/>
<line x1="652.5" y1="749.5" x2="1351.5" y2="50.5" stroke="#fff" stroke-width="1"/>
<line x1="61.5" y1="50.5" x2="661.5" y2="50.5" stroke="#fff" stroke-width="1"/>
<line x1="61.5" y1="321.5" x2="661.5" y2="321.5" stroke="#fff" stroke-width="1"/>
<line x1="61.5" y1="449.5" x2="661.5" y2="449.5" stroke="#fff" stroke-width="1"/>
<line x1="61.5" y1="529.5" x2="661.5" y2="529.5" stroke="#fff" stroke-width="1"/>
<line x1="61.5" y1="586.5" x2="661.5" y2="586.5" stroke="#fff" stroke-width="1"/>
<line x1="61.5" y1="630.5" x2="661.5" y2="630.5" stroke="#fff" stroke-width="1"/>
<line x1="61.5" y1="665.5" x2="661.5" y2="665.5" stroke="#fff" stroke-width="1"/>
<line x1="61.5" y1="694.5" x2="661.5" y2="694.5" stroke="#fff" stroke-width="1"/>
<line x1="61.5" y1="719.5" x2="661.5" y2="719.5" stroke="#fff" stroke-width="1"/>
<line x1="61.5" y1="740.5" x2="661.5" y2="740.5" stroke="#fff" stroke-width="1"/>
</g>
</g>
<g class="c" fill="none">
<rect x="61.5" y="50.5" width="600" height="699" stroke="#fff"/>
<line x1="56.5" y1="50.5" x2="61.5" y2="50.5" stroke="#fff" stroke-width="1"/>
<line x1="56.5" y1="321.5" x2="61.5" y2="321.5" stroke="#fff" stroke-width="1"/>
<line x1="56.5" y1="449.5" x2="61.5" y2="449.5" stroke="#fff" stroke-width="1"/>
<line x1="56.5" y1="529.5" x2="61.5" y2="529.5" stroke="#fff" stroke-width="1"/>
<line x1="56.5" y1="586.5" x2="61.5" y2="586.5" stroke="#fff" stroke-width="1"/>
<line x1="56.5" y1="630.5" x2="61.5" y2="630.5" stroke="#fff" stroke-width="1"/>
<line x1="56.5" y1="665.5" x2="61.5" y2="665.5" stroke="#fff" stroke-width="1"/>
<line x1="56.5" y1="694.5" x2="61.5" y2="694.5" stroke="#fff" stroke-width="1"/>
<line x1="56.5" y1="719.5" x2="61.5" y2="719.5" stroke="#fff" stroke-width="1"/>
<line x1="56.5" y1="740.5" x2="61.5" y2="740.5" stroke="#fff" stroke-width="1"/>
<line x1="61.5" y1="749.5" x2="61.5" y2="754.5" stroke="#fff" stroke-width="1"/>
<line x1="61.5" y1="788.5" x2="61.5" y2="792.5" stroke="#fff" stroke-width="1"/>
<line x1="61.5" y1="826.5" x2="61.5" y2="830.5" stroke="#fff" stroke-width="1"/>
<line x1="121.5" y1="749.5" x2="121.5" y2="754.5" stroke="#fff" stroke-width="1"/>
<line x1="121.5" y1="788.5" x2="121.5" y2="792.5" stroke="#fff" stroke-width="1"/>
<line x1="121.5" y1="826.5" x2="121.5" y2="830.5" stroke="#fff" stroke-width="1"/>
<line x1="181.5" y1="749.5" x2="181.5" y2="754.5" stroke="#fff" stroke-width="1"/>
<line x1="181.5" y1="788.5" x2="181.5" y2="792.5" stroke="#fff" stroke-width="1"/>
<line x1="181.5" y1="826.5" x2="181.5" y2="830.5" stroke="#fff" stroke-width="1"/>
<line x1="241.5" y1="749.5" x2="241.5" y2="754.5" stroke="#fff" stroke-width="1"/>
<line x1="241.5" y1="788.5" x2="241.5" y2="792.5" stroke="#fff" stroke-width="1"/>
<line x1="241.5" y1="826.5" x2="241.5" y2="830.5" stroke="#fff" stroke-width="1"/>
<line x1="301.5" y1="749.5" x2="301.5" y2="754.5" stroke="#fff" stroke-width="1"/>
<line x1="301.5" y1="788.5" x2="301.5" y2="792.5" stroke="#fff" stroke-width="1"/>
<line x1="301.5" y1="826.5" x2="301.5" y2="830.5" stroke="#fff" stroke-width="1"/>
<line x1="361.5" y1="749.5" x2="361.5" y2="754.5" stroke="#fff" stroke-width="1"/>
<line x1="361.5" y1="788.5" x2="361.5" y2="792.5" stroke="#fff" stroke-width="1"/>
<line x1="361.5" y1="826.5" x2="361.5" y2="830.5" stroke="#fff" stroke-width="1"/>
<line x1="421.5" y1="749.5" x2="421.5" y2="754.5" stroke="#fff" stroke-width="1"/>
<line x1="421.5" y1="788.5" x2="421.5" y2="792.5" stroke="#fff" stroke-width="1"/>
<line x1="421.5" y1="826.5" x2="421.5" y2="830.5" stroke="#fff" stroke-width="1"/>
<line x1="481.5" y1="749.5" x2="481.5" y2="754.5" stroke="#fff" stroke-width="1"/>
<line x1="481.5" y1="788.5" x2="481.5" y2="792.5" stroke="#fff" stroke-width="1"/>
<line x1="481.5" y1="826.5" x2="481.5" y2="830.5" stroke="#fff" stroke-width="1"/>
<line x1="541.5" y1="749.5" x2="541.5" y2="754.5" stroke="#fff" stroke-width="1"/>
<line x1="541.5" y1="788.5" x2="541.5" y2="792.5" stroke="#fff" stroke-width="1"/>
<line x1="541.5" y1="826.5" x2="541.5" y2="830.5" stroke="#fff" stroke-width="1"/>
<line x1="601.5" y1="749.5" x2="601.5" y2="754.5" stroke="#fff" stroke-width="1"/>
<line x1="601.5" y1="788.5" x2="601.5" y2="792.5" stroke="#fff" stroke-width="1"/>
<line x1="601.5" y1="826.5" x2="601.5" y2="830.5" stroke="#fff" stroke-width="1"/>
<line x1="661.5" y1="749.5" x2="661.5" y2="754.5" stroke="#fff" stroke-width="1"/>
<line x1="661.5" y1="788.5" x2="661.5" y2="792.5" stroke="#fff" stroke-width="1"/>
<line x1="661.5" y1="826.5" x2="661.5" y2="830.5" stroke="#fff" stroke-width="1"/>
<line x1="61.5" y1="863.5" x2="61.5" y2="867.5" stroke="#fff" stroke-width="1"/>
<line x1="136.5" y1="863.5" x2="136.5" y2="867.5" stroke="#fff" stroke-width="1"/>
<line x1="211.5" y1="863.5" x2="211.5" y2="867.5" stroke="#fff" stroke-width="1"/>
<line x1="286.5" y1="863.5" x2="286.5" y2="867.5" stroke="#fff" stroke-width="1"/>
<line x1="361.5" y1="863.5" x2="361.5" y2="867.5" stroke="#fff" stroke-width="1"/>
<line x1="436.5" y1="863.5" x2="436.5" y2="867.5" stroke="#fff" stroke-width="1"/>
<line x1="511.5" y1="863.5" x2="511.5" y2="867.5" stroke="#fff" stroke-width="1"/>
<line x1="586.5" y1="863.5" x2="586.5" y2="867.5" stroke="#fff" stroke-width="1"/>
<line x1="661.5" y1="863.5" x2="661.5" y2="867.5" stroke="#fff" stroke-width="1"/>
</g>
<text transform="translate(53 55) scale(1 1.07)" text-anchor="end">100</text>
<text transform="translate(53 326) scale(1 1.07)" text-anchor="end">200</text>
<text transform="translate(53 454) scale(1 1.07)" text-anchor="end">300</text>
<text transform="translate(53 534) scale(1 1.07)" text-anchor="end">400</text>
<text transform="translate(53 591) scale(1 1.07)" text-anchor="end">500</text>
<text transform="translate(53 635) scale(1 1.07)" text-anchor="end">600</text>
<text transform="translate(53 670) scale(1 1.07)" text-anchor="end">700</text>
<text transform="translate(53 699) scale(1 1.07)" text-anchor="end">800</text>
<text transform="translate(53 724) scale(1 1.07)" text-anchor="end">900</text>
<text transform="translate(53 745) scale(1 1.07)" text-anchor="end">1000</text>
<text transform="translate(61.5 768) scale(1 1.07)" text-anchor="middle">-50</text>
<text transform="translate(61.5 806) scale(1 1.07)" text-anchor="middle">0</text>
<text transform="translate(61.5 843) scale(1 1.07)" text-anchor="middle">0</text>
<text transform="translate(121.5 768) scale(1 1.07)" text-anchor="middle">-40</text>
<text transform="translate(121.5 806) scale(1 1.07)" text-anchor="middle">10</text>
<text transform="translate(121.5 843) scale(1 1.07)" text-anchor="middle">300</text>
<text transform="translate(181.5 768) scale(1 1.07)" text-anchor="middle">-30</text>
<text transform="translate(181.5 806) scale(1 1.07)" text-anchor="middle">20</text>
<text transform="translate(181.5 843) scale(1 1.07)" text-anchor="middle">600</text>
<text transform="translate(241.5 768) scale(1 1.07)" text-anchor="middle">-20</text>
<text transform="translate(241.5 806) scale(1 1.07)" text-anchor="middle">30</text>
<text transform="translate(241.5 843) scale(1 1.07)" text-anchor="middle">900</text>
<text transform="translate(301.5 768) scale(1 1.07)" text-anchor="middle">-10</text>
<text transform="translate(301.5 806) scale(1 1.07)" text-anchor="middle">40</text>
<text transform="translate(301.5 843) scale(1 1.07)" text-anchor="middle">1200</text>
<text transform="translate(361.5 768) scale(1 1.07)" text-anchor="middle">0</text>
<text transform="translate(361.5 806) scale(1 1.07)" text-anchor="middle">50</text>
<text transform="translate(361.5 843) scale(1 1.07)" text-anchor="middle">1500</text>
<text transform="translate(421.5 768) scale(1 1.07)" text-anchor="middle">10</text>
<text transform="translate(421.5 806) scale(1 1.07)" text-anchor="middle">60</text>
<text transform="translate(421.5 843) scale(1 1.07)" text-anchor="middle">1800</text>
<text transform="translate(481.5 768) scale(1 1.07)" text-anchor="middle">20</text>
<text transform="translate(481.5 806) scale(1 1.07)" text-anchor="middle">70</text>
<text transform="translate(481.5 843) scale(1 1.07)" text-anchor="middle">2100</text>
<text transform="translate(541.5 768) scale(1 1.07)" text-anchor="middle">30</text>
<text transform="translate(541.5 806) scale(1 1.07)" text-anchor="middle">80</text>
<text transform="translate(541.5 843) scale(1 1.07)" text-anchor="middle">2400</text>
<text transform="translate(601.5 768) scale(1 1.07)" text-anchor="middle">40</text>
<text transform="translate(601.5 806) scale(1 1.07)" text-anchor="middle">90</text>
<text transform="translate(601.5 843) scale(1 1.07)" text-anchor="middle">2700</text>
<text transform="translate(661.5 768) scale(1 1.07)" text-anchor="middle">50</text>
<text transform="translate(661.5 806) scale(1 1.07)" text-anchor="middle">100</text>
<text transform="translate(661.5 843) scale(1 1.07)" text-anchor="middle">3000</text>
<text transform="translate(61.5 880) scale(1 1.07)" text-anchor="middle">-100</text>
<text transform="translate(136.5 880) scale(1 1.07)" text-anchor="middle">-50</text>
<text transform="translate(211.5 880) scale(1 1.07)" text-anchor="middle">0</text>
<text transform="translate(286.5 880) scale(1 1.07)" text-anchor="middle">50</text>
<text transform="translate(361.5 880) scale(1 1.07)" text-anchor="middle">100</text>
<text transform="translate(436.5 880) scale(1 1.07)" text-anchor="middle">150</text>
<text transform="translate(511.5 880) scale(1 1.07)" text-anchor="middle">200</text>
<text transform="translate(586.5 880) scale(1 1.07)" text-anchor="middle">250</text>
<text transform="translate(661.5 880) scale(1 1.07)" text-anchor="middle">300</text>
<text transform="translate(274.5 781) scale(1 1.07)" textLength="173" lengthAdjust="spacingAndGlyphs">Temperature, Dewpoint [ °C ]</text>
<text transform="translate(306 819) scale(1 1.07)" textLength="107" lengthAdjust="spacingAndGlyphs">Windspeed [ knt ]</text>
<text transform="translate(292 857) scale(1 1.07)" textLength="137" lengthAdjust="spacingAndGlyphs">CAPE, CINH * 5 [ J/kg ]</text>
<text transform="translate(258.5 893) scale(1 1.07)" textLength="204.5" lengthAdjust="spacingAndGlyphs">Storm Relative Helicity [ m^2/s^2 ]</text>
<g font-size="16" font-weight="bold">
<text x="61" y="28.5" textLength="163" lengthAdjust="spacingAndGlyphs">Station: 72249 Dallas</text>
<text x="245.5" y="28.5" textLength="127.5" lengthAdjust="spacingAndGlyphs">Date: 06.05.2009</text>
<text x="394.5" y="28.5" textLength="92.5" lengthAdjust="spacingAndGlyphs">Time: 0000Z</text>
</g>
<g clip-path="url(#cp)" fill="none" class="c">
<path stroke="#fff" d="M158 736.5h5M160.5 734v5M149 736.5h5M151.5 734v5M149 726.5h5M151.5 724v5M149 718.5h5M151.5 716v5M142 715.5h5M144.5 713v5M153 712.5h5M155.5 710v5M183 707.5h5M185.5 705v5M192 698.5h5M194.5 696v5M193 693.5h5M195.5 691v5M224 689.5h5M226.5 687v5M267 684.5h5M269.5 682v5M297 683.5h5M299.5 681v5M329 683.5h5M331.5 681v5M393 683.5h5M395.5 681v5"/>
<polyline stroke="#e07000" stroke-width="1" points="160.5,736.5 151.5,736.5 151.5,726.5 151.5,718.5 144.5,715.5 155.5,712.5 185.5,707.5 194.5,698.5 195.5,693.5 226.5,689.5 269.5,684.5 299.5,683.5 331.5,683.5 395.5,683.5"/>
<polyline stroke="#e07000" stroke-width="1" points="395.5,682.5 61.5,679.5"/>
<path stroke="#fff" d="M59 679.5h5M61.5 677v5M89 683.5h5M91.5 681v5M109 683.5h5M111.5 681v5M134 683.5h5M136.5 681v5M159 690.5h5M161.5 688v5M163 691.5h5M165.5 689v5M175 693.5h5M177.5 691v5M181 705.5h5M183.5 703v5M184 707.5h5M186.5 705v5M202 714.5h5M204.5 712v5M214 716.5h5M216.5 714v5M207 719.5h5M209.5 717v5M209 725.5h5M211.5 723v5M213 736.5h5M215.5 734v5M59 650.5h5M61.5 648v5M59 667.5h5M61.5 665v5M59 677.5h5M61.5 675v5"/>
<polyline stroke="#ffff00" stroke-width="1" points="61.5,679.5 91.5,683.5 111.5,683.5 136.5,683.5 161.5,690.5 165.5,691.5 177.5,693.5 183.5,705.5 186.5,707.5 204.5,714.5 216.5,716.5 209.5,719.5 211.5,725.5 215.5,736.5"/>
<path stroke="#fff" d="M212 736.5h5M214.5 734v5M231 736.5h5M233.5 734v5M373 727.5h5M375.5 725v5M454 725.5h5M456.5 723v5M513 720.5h5M515.5 718v5M610 716.5h5M612.5 714v5M659 710.5h5M661.5 708v5"/>
<polyline stroke="#c8c800" stroke-width="1" points="214.5,736.5 233.5,736.5 375.5,727.5 456.5,725.5 515.5,720.5 612.5,716.5 661.5,710.5"/>
<path stroke="#fff" d="M371 529.5h5M373.5 527v5M371 533.5h5M373.5 531v5M371 538.5h5M373.5 536v5M371 545.5h5M373.5 543v5M370 549.5h5M372.5 547v5M365 555.5h5M367.5 553v5M365 560.5h5M367.5 558v5M365 567.5h5M367.5 565v5M365 577.5h5M367.5 575v5M365 586.5h5M367.5 584v5M365 590.5h5M367.5 588v5M359 596.5h5M361.5 594v5M347 614.5h5M349.5 612v5M353 627.5h5M355.5 625v5M359 632.5h5M361.5 630v5M299 650.5h5M301.5 648v5M275 665.5h5M277.5 663v5M269 666.5h5M271.5 664v5M269 675.5h5M271.5 673v5M257 676.5h5M259.5 674v5M251 678.5h5M253.5 676v5M245 678.5h5M247.5 676v5M227 683.5h5M229.5 681v5M208 690.5h5M210.5 688v5M215 693.5h5M217.5 691v5M227 697.5h5M229.5 695v5M209 707.5h5M211.5 705v5M209 714.5h5M211.5 712v5M202 715.5h5M204.5 713v5M191 720.5h5M193.5 718v5M185 725.5h5M187.5 723v5M167 727.5h5M169.5 725v5M113 735.5h5M115.5 733v5M101 737.5h5M103.5 735v5"/>
<polyline stroke="#00ff00" stroke-width="1" points="373.5,529.5 373.5,533.5 373.5,538.5 373.5,545.5 372.5,549.5 367.5,555.5 367.5,560.5 367.5,567.5 367.5,577.5 367.5,586.5 367.5,590.5 361.5,596.5 349.5,614.5 355.5,627.5 361.5,632.5 301.5,650.5 277.5,665.5 271.5,666.5 271.5,675.5 259.5,676.5 253.5,678.5 247.5,678.5 229.5,683.5 210.5,690.5 217.5,693.5 229.5,697.5 211.5,707.5 211.5,714.5 204.5,715.5 193.5,720.5 187.5,725.5 169.5,727.5 115.5,735.5 103.5,737.5"/>
<path stroke="#fff" d="M173 529.5h5M175.5 527v5M173 533.5h5M175.5 531v5M173 538.5h5M175.5 536v5M173 545.5h5M175.5 543v5M173 549.5h5M175.5 547v5M167 555.5h5M169.5 553v5M167 560.5h5M169.5 558v5M168 567.5h5M170.5 565v5M168 577.5h5M170.5 575v5M168 586.5h5M170.5 584v5M167 590.5h5M169.5 588v5M161 595.5h5M163.5 593v5M160 614.5h5M162.5 612v5M160 627.5h5M162.5 625v5M164 632.5h5M166.5 630v5M133 650.5h5M135.5 648v5M170 666.5h5M172.5 664v5M135 676.5h5M137.5 674v5M138 677.5h5M140.5 675v5M148 683.5h5M150.5 681v5M162 690.5h5M164.5 688v5M181 693.5h5M183.5 691v5M194 694.5h5M196.5 692v5M227 699.5h5M229.5 697v5M253 707.5h5M255.5 705v5M265 712.5h5M267.5 710v5M287 715.5h5M289.5 713v5M317 719.5h5M319.5 717v5M329 726.5h5M331.5 724v5M299 736.5h5M301.5 734v5M291 736.5h5M293.5 734v5"/>
<polyline stroke="#ff0080" stroke-width="1" points="175.5,529.5 175.5,533.5 175.5,538.5 175.5,545.5 175.5,549.5 169.5,555.5 169.5,560.5 170.5,567.5 170.5,577.5 170.5,586.5 169.5,590.5 163.5,595.5 162.5,614.5 162.5,627.5 166.5,632.5 135.5,650.5 172.5,666.5 137.5,676.5 140.5,677.5 150.5,683.5 164.5,690.5 183.5,693.5 196.5,694.5 229.5,699.5 255.5,707.5 267.5,712.5 289.5,715.5 319.5,719.5 331.5,726.5 301.5,736.5 293.5,736.5"/>
<line x1="61" y1="719.5" x2="662" y2="719.5" stroke="#ff00ff"/>
<path stroke="#fff" d="M439 529.5h5M441.5 527v5M437 533.5h5M439.5 531v5M439 538.5h5M441.5 536v5M438 545.5h5M440.5 543v5M439 549.5h5M441.5 547v5M441 555.5h5M443.5 553v5M444 560.5h5M446.5 558v5M441 567.5h5M443.5 565v5M447 577.5h5M449.5 575v5M449 586.5h5M451.5 584v5M448 590.5h5M450.5 588v5M448 596.5h5M450.5 594v5M463 614.5h5M465.5 612v5M473 627.5h5M475.5 625v5M477 632.5h5M479.5 630v5M491 650.5h5M493.5 648v5M505 666.5h5M507.5 664v5M505 667.5h5M507.5 665v5M513 677.5h5M515.5 675v5M508 677.5h5M510.5 675v5M487 678.5h5M489.5 676v5M477 678.5h5M479.5 676v5M472 679.5h5M474.5 677v5M479 683.5h5M481.5 681v5M480 684.5h5M482.5 682v5M489 692.5h5M491.5 690v5M490 698.5h5M492.5 696v5M491 707.5h5M493.5 705v5M495 719.5h5M497.5 717v5M499 722.5h5M501.5 720v5M501 725.5h5M503.5 723v5M507 728.5h5M509.5 726v5M517 736.5h5M519.5 734v5"/>
<polyline stroke="#ff0000" stroke-width="1" points="441.5,529.5 439.5,533.5 441.5,538.5 440.5,545.5 441.5,549.5 443.5,555.5 446.5,560.5 443.5,567.5 449.5,577.5 451.5,586.5 450.5,590.5 450.5,596.5 465.5,614.5 475.5,627.5 479.5,632.5 493.5,650.5 507.5,666.5 507.5,667.5 515.5,677.5 510.5,677.5 500.5,677.5 499.5,678.5 489.5,678.5 479.5,678.5 474.5,679.5 481.5,683.5 482.5,684.5 491.5,692.5 492.5,698.5 493.5,707.5 497.5,719.5 501.5,722.5 503.5,725.5 509.5,728.5 519.5,736.5"/>
<path stroke="#fff" d="M205 529.5h5M207.5 527v5M311 533.5h5M313.5 531v5M259 538.5h5M261.5 536v5M360 545.5h5M362.5 543v5M361 549.5h5M363.5 547v5M387 555.5h5M389.5 553v5M396 559.5h5M398.5 557v5M399 567.5h5M401.5 565v5M393 577.5h5M395.5 575v5M394 586.5h5M396.5 584v5M388 590.5h5M390.5 588v5M421 596.5h5M423.5 594v5M406 614.5h5M408.5 612v5M395 627.5h5M397.5 625v5M396 632.5h5M398.5 630v5M397 650.5h5M399.5 648v5M397 665.5h5M399.5 663v5M396 667.5h5M398.5 665v5M393 676.5h5M395.5 674v5M379 678.5h5M381.5 676v5M387 678.5h5M389.5 676v5M393 678.5h5M395.5 676v5M400 678.5h5M402.5 676v5M412 679.5h5M414.5 677v5M467 683.5h5M469.5 681v5M474 683.5h5M476.5 681v5M480 684.5h5M482.5 682v5M489 692.5h5M491.5 690v5M490 698.5h5M492.5 696v5M491 707.5h5M493.5 705v5M495 719.5h5M497.5 717v5M491 722.5h5M493.5 720v5M488 736.5h5M490.5 734v5"/>
<polyline stroke="#00ffff" stroke-width="1" points="207.5,529.5 313.5,533.5 261.5,538.5 362.5,545.5 363.5,549.5 389.5,555.5 398.5,559.5 401.5,567.5 395.5,577.5 396.5,586.5 390.5,590.5 423.5,596.5 408.5,614.5 397.5,627.5 398.5,632.5 399.5,650.5 399.5,665.5 398.5,667.5 395.5,676.5 381.5,678.5 389.5,678.5 395.5,678.5 402.5,678.5 414.5,679.5 469.5,683.5 476.5,683.5 482.5,684.5 491.5,692.5 492.5,698.5 493.5,707.5 497.5,719.5 493.5,722.5 490.5,736.5"/>
<polyline stroke="#ff00ff" stroke-width="1" points="497.5,719.5 524.5,737.5"/>
<polyline stroke="#ff00ff" stroke-width="1" points="497.5,719.5 489.5,737.5"/>
<polyline stroke="#ffc0ff" stroke-width="1" points="505.5,722.5 528.5,737.5"/>
<polyline stroke="#ffc0ff" stroke-width="1" points="493.5,50.5 486.5,75.5 475.5,117.5 467.5,155.5 461.5,190.5 457.5,226.5 455.5,280.5 457.5,321.5 459.5,355.5 465.5,390.5 470.5,420.5 475.5,449.5 479.5,468.5 483.5,487.5 484.5,501.5 486.5,515.5 488.5,529.5 493.5,586.5 495.5,629.5 496.5,654.5 497.5,665.5 497.5,694.5 497.5,719.5"/>
<polyline stroke="#ff00ff" stroke-width="1" points="490.5,50.5 482.5,77.5 471.5,117.5 464.5,157.5 458.5,190.5 454.5,226.5 452.5,280.5 455.5,321.5 457.5,355.5 463.5,390.5 468.5,420.5 473.5,449.5 476.5,468.5 480.5,487.5 481.5,501.5 483.5,515.5 485.5,529.5 491.5,586.5 493.5,629.5 494.5,654.5 495.5,665.5 496.5,694.5 496.5,719.5"/>
<path stroke="#fff" d="M490.5 736V741M519.5 736V741"/>
</g>
<g class="c">
<rect x="67.5" y="607.5" width="43" height="17" fill="#000" stroke="#ffff00"/>
<rect x="67.5" y="636.5" width="57" height="17" fill="#000" stroke="#e07000"/>
<rect x="625.5" y="710.5" width="30" height="17" fill="#000" stroke="#ff00ff"/>
</g>
<text transform="translate(71.5 620.5) scale(1 1.07)" fill="#ffff00" textLength="34.5" lengthAdjust="spacingAndGlyphs">CAPE</text>
<text transform="translate(71.5 649.5) scale(1 1.07)" fill="#e07000" textLength="48.5" lengthAdjust="spacingAndGlyphs">CINH * 5</text>
<text transform="translate(629.5 723.5) scale(1 1.07)" fill="#ff00ff" textLength="22.5" lengthAdjust="spacingAndGlyphs">LCL</text>
<g class="c">
<line x1="661.5" y1="529.5" x2="666.5" y2="529.5" stroke="#fff" stroke-width="1"/>
<line x1="661.5" y1="586.5" x2="666.5" y2="586.5" stroke="#fff" stroke-width="1"/>
<line x1="661.5" y1="630.5" x2="666.5" y2="630.5" stroke="#fff" stroke-width="1"/>
<line x1="661.5" y1="665.5" x2="666.5" y2="665.5" stroke="#fff" stroke-width="1"/>
<line x1="661.5" y1="694.5" x2="666.5" y2="694.5" stroke="#fff" stroke-width="1"/>
<line x1="661.5" y1="719.5" x2="666.5" y2="719.5" stroke="#fff" stroke-width="1"/>
</g>
<text transform="translate(670 528.5) scale(1 1.07)">7478m</text>
<text transform="translate(670 585.5) scale(1 1.07)">5800m</text>
<text transform="translate(670 629.5) scale(1 1.07)">4339m</text>
<text transform="translate(670 664.5) scale(1 1.07)">3106m</text>
<text transform="translate(670 693.5) scale(1 1.07)">1979m</text>
<text transform="translate(670 718.5) scale(1 1.07)">976m</text>
<g>
<text transform="translate(894 40) scale(1 1.07)">Parameter</text>
<line class="c" x1="894" y1="41.5" x2="954" y2="41.5" stroke="#fff"/>
<text transform="translate(1124.5 40) scale(1 1.07)" text-anchor="end">Value LCL</text>
<line class="c" x1="1064" y1="41.5" x2="1124.5" y2="41.5" stroke="#fff"/>
<text transform="translate(1214 40) scale(1 1.07)" text-anchor="end">Value CCL</text>
<line class="c" x1="1152" y1="41.5" x2="1214" y2="41.5" stroke="#fff"/>
<text transform="translate(1230 40) scale(1 1.07)">Unit</text>
<line class="c" x1="1230" y1="41.5" x2="1253" y2="41.5" stroke="#fff"/>
<text transform="translate(894 104) scale(1 1.07)">Parcels: Using 100mB mean layer LCL + CCL</text>
<line class="c" x1="894" y1="105.5" x2="1160" y2="105.5" stroke="#fff"/>
<text transform="translate(894 339) scale(1 1.07)">Convective Indices</text>
<line class="c" x1="894" y1="340.5" x2="1000" y2="340.5" stroke="#fff"/>
<text transform="translate(894 588) scale(1 1.07)">Wind Parameters</text>
<line class="c" x1="894" y1="589.5" x2="995" y2="589.5" stroke="#fff"/>
<text transform="translate(894 62) scale(1 1.07)">Convective Temperature:</text>
<text transform="translate(1123.7 62) scale(1 1.07)" text-anchor="end" fill="#ff0000">27.33</text>
<text transform="translate(1230 62) scale(1 1.07)">[°C]</text>
<text transform="translate(894 79) scale(1 1.07)">Snowfall Height:</text>
<text transform="translate(1123.7 79) scale(1 1.07)" text-anchor="end">3949.17</text>
<text transform="translate(1230 79) scale(1 1.07)">[m]</text>
<text transform="translate(894 124) scale(1 1.07)">Lifted Index:</text>
<text transform="translate(1123.7 124) scale(1 1.07)" text-anchor="end" fill="#ff0000">-6.78</text>
<text transform="translate(1213.5 124) scale(1 1.07)" text-anchor="end" fill="#ff0000">-7.08</text>
<text transform="translate(1230 124) scale(1 1.07)">[°C]</text>
<text transform="translate(894 141) scale(1 1.07)">CAPE:</text>
<text transform="translate(1123.7 141) scale(1 1.07)" text-anchor="end" fill="#ff0000">758.11</text>
<text transform="translate(1213.5 141) scale(1 1.07)" text-anchor="end" fill="#ff0000">811.14</text>
<text transform="translate(1230 141) scale(1 1.07)">[J/kg]</text>
<text transform="translate(894 158) scale(1 1.07)">CINH:</text>
<text transform="translate(1123.7 158) scale(1 1.07)" text-anchor="end" fill="#ffff00">89.14</text>
<text transform="translate(1230 158) scale(1 1.07)">[J/kg]</text>
<text transform="translate(894 175) scale(1 1.07)">CAPE Virt.:</text>
<text transform="translate(1123.7 175) scale(1 1.07)" text-anchor="end" fill="#ff0000">872.94</text>
<text transform="translate(1213.5 175) scale(1 1.07)" text-anchor="end" fill="#ff0000">928.95</text>
<text transform="translate(1230 175) scale(1 1.07)">[J/kg]</text>
<text transform="translate(894 192) scale(1 1.07)">CINH Virt.:</text>
<text transform="translate(1123.7 192) scale(1 1.07)" text-anchor="end" fill="#ff0000">42.22</text>
<text transform="translate(1230 192) scale(1 1.07)">[J/kg]</text>
<text transform="translate(894 209) scale(1 1.07)">DCAPE (LFS = 520mB):</text>
<text transform="translate(1123.7 209) scale(1 1.07)" text-anchor="end" fill="#ff0000">598.71</text>
<text transform="translate(1230 209) scale(1 1.07)">[J/kg]</text>
<text transform="translate(894 226) scale(1 1.07)">850-600 Lapse Rate:</text>
<text transform="translate(1123.7 226) scale(1 1.07)" text-anchor="end" fill="#00ff00">15.30</text>
<text transform="translate(1230 226) scale(1 1.07)">[°C]</text>
<text transform="translate(894 243) scale(1 1.07)">Fawbush-Miller Hail Size:</text>
<text transform="translate(1123.7 243) scale(1 1.07)" text-anchor="end" fill="#ff0000">3.8 - 5.1</text>
<text transform="translate(1230 243) scale(1 1.07)">[cm]</text>
<text transform="translate(894 260) scale(1 1.07)">Sig. Hail Param. (SHIP):</text>
<text transform="translate(1123.7 260) scale(1 1.07)" text-anchor="end" fill="#ff0000">1.44</text>
<text transform="translate(1230 260) scale(1 1.07)">[1]</text>
<text transform="translate(894 277) scale(1 1.07)">Max. Hail Size (new, new2, old):</text>
<text transform="translate(1123.7 277) scale(1 1.07)" text-anchor="end" fill="#ff0000">5.93</text>
<text transform="translate(1230 277) scale(1 1.07)">[cm]</text>
<text transform="translate(894 297) scale(1 1.07)">LCL / CCL (AGL):</text>
<text transform="translate(1123.7 297) scale(1 1.07)" text-anchor="end" fill="#ff0000">789.84</text>
<text transform="translate(1213.5 297) scale(1 1.07)" text-anchor="end" fill="#ff0000">880.08</text>
<text transform="translate(1230 297) scale(1 1.07)">[m]</text>
<text transform="translate(894 314) scale(1 1.07)">Convective Height:</text>
<text transform="translate(1123.7 314) scale(1 1.07)" text-anchor="end" fill="#ffff00">6.52</text>
<text transform="translate(1213.5 314) scale(1 1.07)" text-anchor="end" fill="#ffff00">6.43</text>
<text transform="translate(1230 314) scale(1 1.07)">[km]</text>
<text transform="translate(894 359) scale(1 1.07)">Showalter Index:</text>
<text transform="translate(1123.7 359) scale(1 1.07)" text-anchor="end" fill="#ff0000">-5.79</text>
<text transform="translate(1230 359) scale(1 1.07)">[°C]</text>
<text transform="translate(894 376) scale(1 1.07)">Modified Thompson Index:</text>
<text transform="translate(1123.7 376) scale(1 1.07)" text-anchor="end" fill="#ff0000">39.91</text>
<text transform="translate(1230 376) scale(1 1.07)">[°C]</text>
<text transform="translate(894 393) scale(1 1.07)">Total Totals Index:</text>
<text transform="translate(1123.7 393) scale(1 1.07)" text-anchor="end" fill="#ff0000">54.20</text>
<text transform="translate(1230 393) scale(1 1.07)">[°C]</text>
<text transform="translate(894 410) scale(1 1.07)">KO Index:</text>
<text transform="translate(1123.7 410) scale(1 1.07)" text-anchor="end" fill="#ff0000">-22.87</text>
<text transform="translate(1230 410) scale(1 1.07)">[1]</text>
<text transform="translate(894 427) scale(1 1.07)">Craven SigSvr / 1000:</text>
<text transform="translate(1123.7 427) scale(1 1.07)" text-anchor="end" fill="#ff0000">22.19</text>
<text transform="translate(1230 427) scale(1 1.07)">[m^3/s^3]</text>
<text transform="translate(894 444) scale(1 1.07)">SCP RM (new, old):</text>
<text transform="translate(1123.7 444) scale(1 1.07)" text-anchor="end" fill="#ff0000">5.33</text>
<text transform="translate(1230 444) scale(1 1.07)">[1]</text>
<text transform="translate(894 461) scale(1 1.07)">SCP LM (new, old):</text>
<text transform="translate(1123.7 461) scale(1 1.07)" text-anchor="end" fill="#ff0000">1.39</text>
<text transform="translate(1230 461) scale(1 1.07)">[1]</text>
<text transform="translate(894 478) scale(1 1.07)">STP (new, old):</text>
<text transform="translate(1123.7 478) scale(1 1.07)" text-anchor="end" fill="#ff0000">1.40</text>
<text transform="translate(1230 478) scale(1 1.07)">[1]</text>
<text transform="translate(894 495) scale(1 1.07)">SB STP (fix):</text>
<text transform="translate(1123.7 495) scale(1 1.07)" text-anchor="end" fill="#ff0000">2.19</text>
<text transform="translate(1230 495) scale(1 1.07)">[1]</text>
<text transform="translate(894 512) scale(1 1.07)">Derecho Comp Param:</text>
<text transform="translate(1123.7 512) scale(1 1.07)" text-anchor="end" fill="#ff0000">1.42</text>
<text transform="translate(1230 512) scale(1 1.07)">[1]</text>
<text transform="translate(894 529) scale(1 1.07)">MCS 18m/s (MMP, MSP):</text>
<text transform="translate(1123.7 529) scale(1 1.07)" text-anchor="end" fill="#00ff00">0.00</text>
<text transform="translate(1230 529) scale(1 1.07)">[%]</text>
<text transform="translate(894 546) scale(1 1.07)">Exp. Supercell Index CH:</text>
<text transform="translate(1123.7 546) scale(1 1.07)" text-anchor="end" fill="#ff0000">5.52</text>
<text transform="translate(1230 546) scale(1 1.07)">[1]</text>
<text transform="translate(894 563) scale(1 1.07)">SWISS 12 Index:</text>
<text transform="translate(1123.7 563) scale(1 1.07)" text-anchor="end" fill="#ff0000">-13.96</text>
<text transform="translate(1230 563) scale(1 1.07)">[1]</text>
<text transform="translate(894 608) scale(1 1.07)">Storm Direction:</text>
<text transform="translate(1123.7 608) scale(1 1.07)" text-anchor="end">271.14</text>
<text transform="translate(1230 608) scale(1 1.07)">[°]</text>
<text transform="translate(894 625) scale(1 1.07)">Storm Motion:</text>
<text transform="translate(1123.7 625) scale(1 1.07)" text-anchor="end" fill="#ff0000">32.98</text>
<text transform="translate(1230 625) scale(1 1.07)">[knt]</text>
<text transform="translate(894 645) scale(1 1.07)">SR Wind Sfc-2km:</text>
<text transform="translate(1123.7 645) scale(1 1.07)" text-anchor="end" fill="#ff0000">33.98</text>
<text transform="translate(1230 645) scale(1 1.07)">[knt]</text>
<text transform="translate(894 662) scale(1 1.07)">SR Wind 4km-6km:</text>
<text transform="translate(1123.7 662) scale(1 1.07)" text-anchor="end" fill="#ff0000">16.54</text>
<text transform="translate(1230 662) scale(1 1.07)">[knt]</text>
<text transform="translate(894 679) scale(1 1.07)">SR Wind 9km-11km:</text>
<text transform="translate(1123.7 679) scale(1 1.07)" text-anchor="end">---</text>
<text transform="translate(1230 679) scale(1 1.07)">[knt]</text>
<text transform="translate(894 699) scale(1 1.07)">Effective Shear 6000:</text>
<text transform="translate(1123.7 699) scale(1 1.07)" text-anchor="end" fill="#ff0000">56.86</text>
<text transform="translate(1230 699) scale(1 1.07)">[knt]</text>
<text transform="translate(894 719) scale(1 1.07)">Bulk Richardson Number:</text>
<text transform="translate(1123.7 719) scale(1 1.07)" text-anchor="end" fill="#ffff00">5.09</text>
<text transform="translate(1213.5 719) scale(1 1.07)" text-anchor="end" fill="#ffff00">5.45</text>
<text transform="translate(1230 719) scale(1 1.07)">[1]</text>
<text transform="translate(894 739) scale(1 1.07)">3km Effective SRH:</text>
<text transform="translate(1123.7 739) scale(1 1.07)" text-anchor="end" fill="#ff0000">366.25</text>
<text transform="translate(1230 739) scale(1 1.07)">[m^2/s^2]</text>
<text transform="translate(894 756) scale(1 1.07)">Max 3km SRH (Sfc-2km):</text>
<text transform="translate(1123.7 756) scale(1 1.07)" text-anchor="end" fill="#ff0000">379.26</text>
<text transform="translate(1230 756) scale(1 1.07)">[m^2/s^2]</text>
<text transform="translate(894 773) scale(1 1.07)">Max 3km SRH Level AGL:</text>
<text transform="translate(1123.7 773) scale(1 1.07)" text-anchor="end" fill="#ff0000">439.00</text>
<text transform="translate(1230 773) scale(1 1.07)">[m]</text>
<text transform="translate(894 793) scale(1 1.07)">3km Energy Helicity Index:</text>
<text transform="translate(1123.7 793) scale(1 1.07)" text-anchor="end" fill="#ff0000">1.74</text>
<text transform="translate(1213.5 793) scale(1 1.07)" text-anchor="end" fill="#ff0000">1.86</text>
<text transform="translate(1230 793) scale(1 1.07)">[1]</text>
<text transform="translate(894 810) scale(1 1.07)">3km Vorticity Gen. Pot.:</text>
<text transform="translate(1123.7 810) scale(1 1.07)" text-anchor="end" fill="#ff0000">0.19</text>
<text transform="translate(1213.5 810) scale(1 1.07)" text-anchor="end" fill="#ff0000">0.19</text>
<text transform="translate(1230 810) scale(1 1.07)">[m/s^2]</text>
<text transform="translate(1123.7 277) scale(1 1.07)" xml:space="preserve">,  <tspan fill="#ff0000">6.58</tspan>,  <tspan fill="#ff0000">4.51</tspan></text>
<text transform="translate(1123.7 444) scale(1 1.07)" xml:space="preserve">,  <tspan fill="#ff0000">10.54</tspan></text>
<text transform="translate(1123.7 461) scale(1 1.07)" xml:space="preserve">,  <tspan fill="#ff0000">1.51</tspan></text>
<text transform="translate(1123.7 478) scale(1 1.07)" xml:space="preserve">,  <tspan fill="#ff0000">2.54</tspan></text>
<text transform="translate(1123.7 529) scale(1 1.07)" xml:space="preserve">,  ---</text>
</g>
<rect x="729" y="827" width="15" height="8" fill="#ff0000" class="c"/>
<text transform="translate(753 836) scale(1 1.07)" fill="#ff0000">Temperature Profile</text>
<rect x="729" y="847" width="15" height="8" fill="#00ffff" class="c"/>
<text transform="translate(753 856) scale(1 1.07)" fill="#00ffff">Dewpoint Profile</text>
<rect x="729" y="867" width="15" height="8" fill="#00ff00" class="c"/>
<text transform="translate(753 876) scale(1 1.07)" fill="#00ff00">OBS Windspeed Profile</text>
<rect x="729" y="887" width="15" height="8" fill="#ff0080" class="c"/>
<text transform="translate(753 896) scale(1 1.07)" fill="#ff0080">SR Windspeed Profile</text>
<rect x="729" y="907" width="15" height="8" fill="#c8c800" class="c"/>
<text transform="translate(753 916) scale(1 1.07)" fill="#c8c800">Sfc-3km Storm Relative Helicity Profile</text>
<rect x="729" y="927" width="15" height="8" fill="#3c3c00" class="c"/>
<text transform="translate(753 936) scale(1 1.07)" fill="#3c3c00">Effective Layer (CAPE &gt;= 100 J/kg)</text>
<rect x="1079" y="827" width="15" height="8" fill="#00ff00" class="c"/>
<text transform="translate(1103 836) scale(1 1.07)" fill="#00ff00">No / Non Severe Thunderstorms</text>
<rect x="1079" y="847" width="15" height="8" fill="#ffff00" class="c"/>
<text transform="translate(1103 856) scale(1 1.07)" fill="#ffff00">Scattered / Moderate Thunderstorms</text>
<rect x="1079" y="867" width="15" height="8" fill="#ff0000" class="c"/>
<text transform="translate(1103 876) scale(1 1.07)" fill="#ff0000">Widespread / Severe Thunderstorms</text>
<g font-weight="bold" font-size="13" text-anchor="middle">
<text transform="translate(761.5 32) scale(1 1.07)" fill="#00ff00">OBS</text>
<text transform="translate(826.5 32) scale(1 1.07)" fill="#ff0080">SR</text>
</g>
<g class="c" fill="none">
<line x1="761.5" y1="40.5" x2="761.5" y2="769.5" stroke="#00ff00" stroke-width="1"/>
<line x1="826.5" y1="40.5" x2="826.5" y2="769.5" stroke="#ff0080" stroke-width="1"/>
</g>
<path class="c" fill="none" stroke="#fff" d="M761 529.4L732 529.4M761 533.5L732 533.5M761 538.3L732 537.4M761 545.5L732 544.4M761 549.4L732 548.5M761 555.6L732 553.3M761 560.5L732 558.3M761 567.6L732 565.3M761 578L732 574.9M761 578.4L732 575.5M761 586.6L732 583.4M761 590.6L732 588.3M761 596.5L732 596.5M761 614.3L732 619.5M761 627.6L732 630.6M761 632.5L732 635.6M761 650.3L733.3 658.5M761 666L736.1 679.7M761 667.4L736 681M761 675.6L734.2 685.8M761 678.3L734.2 688.6M761 679.7L734.2 690.6M761 683.8L735 696.8M761 684.4L735.2 697.6M761 690.6L736.1 704.3M761 694L738 710.5M761 698.8L743.3 720.7M761 708.4L748.3 733.7M761 713.9L751.5 740.9M761 719.4L756.3 745.4M762 724.8L766.5 749.5M762 729L771.3 752.5M762 733L776 752.5M762 737.2L783.6 755.6M826 529.4L797 530.4M826 533.5L797 534.4M826 538.3L797 538.3M826 545.5L797 543.4M826 549.4L797 547.4M826 555.6L797 552.4M826 560.5L797 557.4M826 567.6L797 562.4M826 578L798.3 571.7M826 578.5L798.4 572.3M826 586.6L798.3 580.2M826 590.6L797 587.3M826 596.5L797 597.5M826 614.3L802 629.5M826 627.6L799 637.7M826 632.5L798 641.5M826 650.3L813.3 676.7M827 666L829.5 695.4M827 667.4L830.1 696.8M827 675.6L833.5 704.3M827 678.3L834.9 706.4M827 679.7L835.6 707.8M827 683.8L839 710.5M827 684.4L839.3 711.2M827 690.6L845.9 712.5M827 694L843.8 716.6M827 698.8L842.5 722.1M827 708.4L846.6 728.7M827 713.9L848.6 733.3M827 719.4L852 734.4M827 724.8L853.8 738.5M827 729L855 740M827 733L855.5 740.6M827 737.2L855.8 741.5"/>
</svg>
</body></html>
